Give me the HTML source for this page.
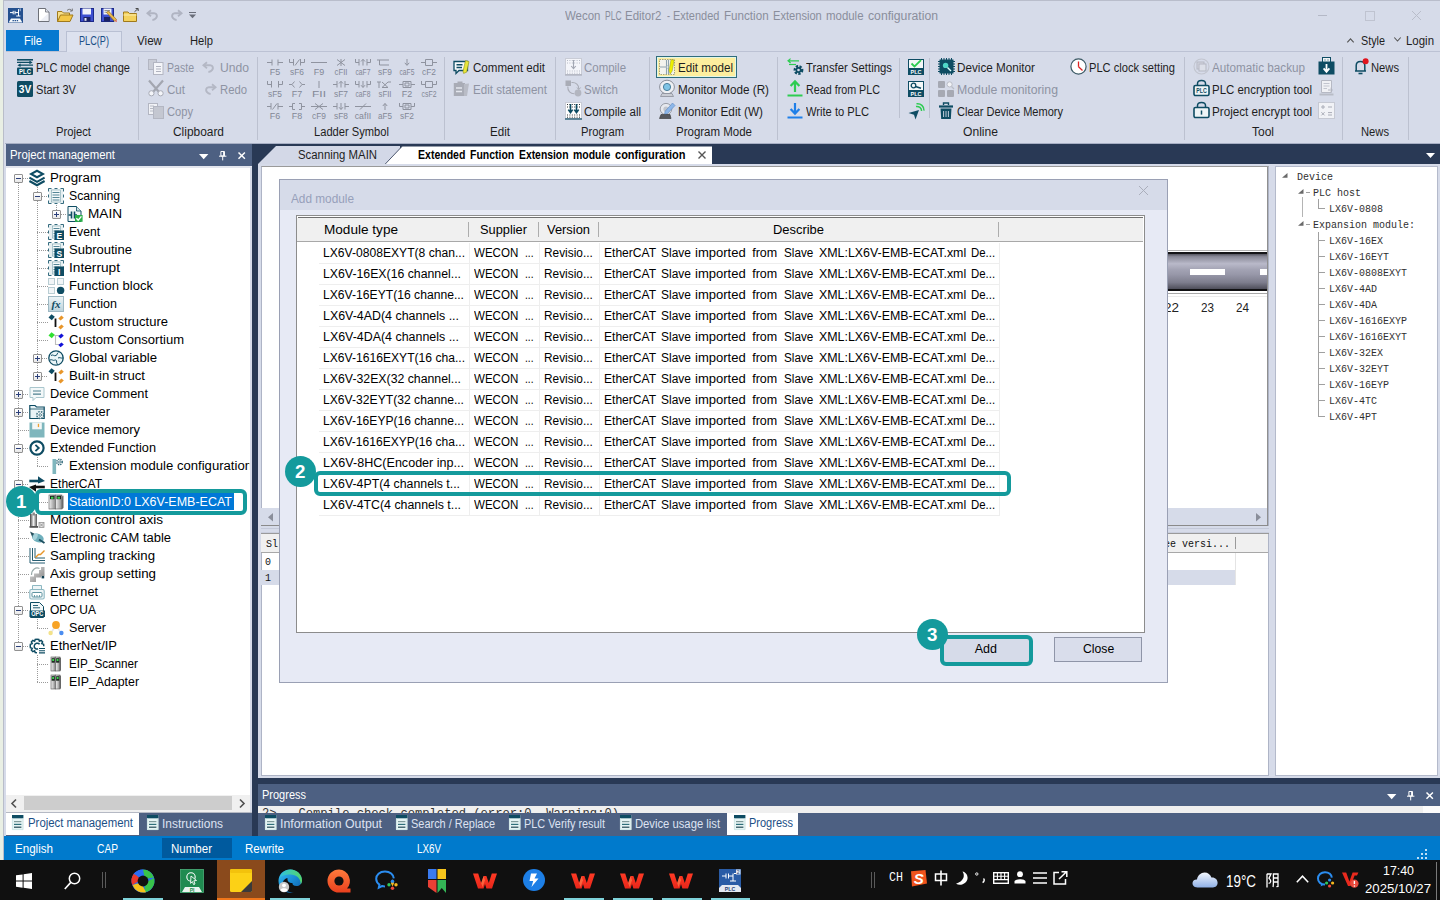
<!DOCTYPE html>
<html><head><meta charset="utf-8"><title>Wecon PLC Editor2</title>
<style>
html,body{margin:0;padding:0;}
body{width:1440px;height:900px;overflow:hidden;position:relative;background:#d6dbe9;font-family:"Liberation Sans",sans-serif;}
.t{position:absolute;white-space:nowrap;margin:0;padding:0;}
.r{position:absolute;box-sizing:border-box;margin:0;padding:0;}
svg{overflow:visible;}
</style></head><body>
<div class="r" style="left:0px;top:0px;width:3px;height:900px;background:#e9efe4;"></div>
<div class="r" style="left:3px;top:0px;width:1px;height:860px;background:#b9bdc9;"></div>
<div class="t" style="left:565.00px;top:7.00px;font-size:12px;line-height:18px;color:#8a8e9c;transform:scale(0.9561,1.000);transform-origin:0 50%;">Wecon</div>
<div class="t" style="left:604.70px;top:7.00px;font-size:12px;line-height:18px;color:#8a8e9c;transform:scale(0.7111,1.000);transform-origin:0 50%;">PLC</div>
<div class="t" style="left:625.30px;top:7.00px;font-size:12px;line-height:18px;color:#8a8e9c;transform:scale(0.9573,1.000);transform-origin:0 50%;">Editor2</div>
<div class="t" style="left:666.70px;top:7.00px;font-size:12px;line-height:18px;color:#8a8e9c;transform:scale(0.7507,1.000);transform-origin:0 50%;">-</div>
<div class="t" style="left:672.80px;top:7.00px;font-size:12px;line-height:18px;color:#8a8e9c;transform:scale(0.9151,1.000);transform-origin:0 50%;">Extended</div>
<div class="t" style="left:723.70px;top:7.00px;font-size:12px;line-height:18px;color:#8a8e9c;transform:scale(0.9690,1.000);transform-origin:0 50%;">Function</div>
<div class="t" style="left:772.50px;top:7.00px;font-size:12px;line-height:18px;color:#8a8e9c;transform:scale(0.9260,1.000);transform-origin:0 50%;">Extension</div>
<div class="t" style="left:825.50px;top:7.00px;font-size:12px;line-height:18px;color:#8a8e9c;transform:scale(0.9528,1.000);transform-origin:0 50%;">module</div>
<div class="t" style="left:867.50px;top:7.00px;font-size:12px;line-height:18px;color:#8a8e9c;transform:scale(1.0187,1.000);transform-origin:0 50%;">configuration</div>
<div class="r" style="left:1318px;top:15px;width:9px;height:1px;background:#b4b8c6;"></div>
<div class="r" style="left:4px;top:0px;width:1436px;height:1px;background:#b9bdcb;"></div>
<div class="r" style="left:1365px;top:11px;width:9.5px;height:9.5px;border:1px solid #bfc3d0;"></div>
<svg class="r" style="left:1412px;top:11px;" width="9" height="9" viewBox="0 0 9 9" preserveAspectRatio="none"><path d="M0 0L9 9M9 0L0 9" stroke="#b9bdca" stroke-width="1" fill="none"/></svg>
<div class="r" style="left:6px;top:30px;width:53px;height:21px;background:#0679d0;"></div>
<div class="t" style="left:24.00px;top:32.00px;font-size:12px;line-height:18px;color:#ffffff;transform:scale(0.9309,1.000);transform-origin:0 50%;">File</div>
<div class="r" style="left:66px;top:31px;width:56px;height:21px;background:#dde2ef;border:1px solid #b9c0d3;border-bottom:none;"></div>
<div class="t" style="left:79.00px;top:32.00px;font-size:12px;line-height:18px;color:#1b4f86;transform:scale(0.7626,1.000);transform-origin:0 50%;">PLC(P)</div>
<div class="t" style="left:137.00px;top:32.00px;font-size:12px;line-height:18px;color:#1e1e1e;transform:scale(0.9692,1.000);transform-origin:0 50%;">View</div>
<div class="t" style="left:190.00px;top:32.00px;font-size:12px;line-height:18px;color:#1e1e1e;transform:scale(0.9319,1.000);transform-origin:0 50%;">Help</div>
<svg class="r" style="left:1347px;top:38px;" width="7" height="5" viewBox="0 0 7 5" preserveAspectRatio="none"><path d="M0.3 4.3L3.5 0.8L6.7 4.3" stroke="#555" stroke-width="1.1" fill="none"/></svg>
<div class="t" style="left:1361.00px;top:32.00px;font-size:12px;line-height:18px;color:#1e1e1e;transform:scale(0.8996,1.000);transform-origin:0 50%;">Style</div>
<svg class="r" style="left:1394px;top:37px;" width="7" height="5" viewBox="0 0 7 5" preserveAspectRatio="none"><path d="M0.3 0.5L3.5 4L6.7 0.5" stroke="#555" stroke-width="1.1" fill="none"/></svg>
<div class="t" style="left:1406.00px;top:32.00px;font-size:12px;line-height:18px;color:#1e1e1e;transform:scale(0.9536,1.000);transform-origin:0 50%;">Login</div>
<div class="r" style="left:6px;top:51px;width:60px;height:1px;background:#bcc2d4;"></div>
<div class="r" style="left:122px;top:51px;width:1318px;height:1px;background:#bcc2d4;"></div>
<div class="r" style="left:138px;top:57px;width:1px;height:83px;background:#bcc1d0;"></div>
<div class="r" style="left:257px;top:57px;width:1px;height:83px;background:#bcc1d0;"></div>
<div class="r" style="left:444px;top:57px;width:1px;height:83px;background:#bcc1d0;"></div>
<div class="r" style="left:555px;top:57px;width:1px;height:83px;background:#bcc1d0;"></div>
<div class="r" style="left:649px;top:57px;width:1px;height:83px;background:#bcc1d0;"></div>
<div class="r" style="left:777px;top:57px;width:1px;height:83px;background:#bcc1d0;"></div>
<div class="r" style="left:1184px;top:57px;width:1px;height:83px;background:#bcc1d0;"></div>
<div class="r" style="left:1342px;top:57px;width:1px;height:83px;background:#bcc1d0;"></div>
<div class="r" style="left:1408px;top:57px;width:1px;height:83px;background:#bcc1d0;"></div>
<div class="r" style="left:899px;top:58px;width:1px;height:60px;background:#bcc1d0;"></div>
<div class="r" style="left:929px;top:58px;width:1px;height:60px;background:#bcc1d0;"></div>
<div class="t" style="left:56.00px;top:123.00px;font-size:12px;line-height:18px;color:#1e1e1e;transform:scale(0.9371,1.000);transform-origin:0 50%;">Project</div>
<div class="t" style="left:173.00px;top:123.00px;font-size:12px;line-height:18px;color:#1e1e1e;transform:scale(0.9929,1.000);transform-origin:0 50%;">Clipboard</div>
<div class="t" style="left:314.00px;top:123.00px;font-size:12px;line-height:18px;color:#1e1e1e;transform:scale(0.9292,1.000);transform-origin:0 50%;">Ladder Symbol</div>
<div class="t" style="left:490.00px;top:123.00px;font-size:12px;line-height:18px;color:#1e1e1e;transform:scale(0.9672,1.000);transform-origin:0 50%;">Edit</div>
<div class="t" style="left:581.00px;top:123.00px;font-size:12px;line-height:18px;color:#1e1e1e;transform:scale(0.9345,1.000);transform-origin:0 50%;">Program</div>
<div class="t" style="left:676.00px;top:123.00px;font-size:12px;line-height:18px;color:#1e1e1e;transform:scale(0.9576,1.000);transform-origin:0 50%;">Program Mode</div>
<div class="t" style="left:963.00px;top:123.00px;font-size:12px;line-height:18px;color:#1e1e1e;transform:scale(1.0090,1.000);transform-origin:0 50%;">Online</div>
<div class="t" style="left:1252.00px;top:123.00px;font-size:12px;line-height:18px;color:#1e1e1e;">Tool</div>
<div class="t" style="left:1361.00px;top:123.00px;font-size:12px;line-height:18px;color:#1e1e1e;transform:scale(0.9331,1.000);transform-origin:0 50%;">News</div>
<div class="t" style="left:36.00px;top:58.50px;font-size:12px;line-height:18px;color:#1e1e1e;transform:scale(0.9210,1.000);transform-origin:0 50%;">PLC model change</div>
<div class="t" style="left:36.00px;top:80.50px;font-size:12px;line-height:18px;color:#1e1e1e;transform:scale(0.9226,1.000);transform-origin:0 50%;">Start 3V</div>
<div class="t" style="left:167.00px;top:58.50px;font-size:12px;line-height:18px;color:#8e93a3;transform:scale(0.8799,1.000);transform-origin:0 50%;">Paste</div>
<div class="t" style="left:220.00px;top:58.50px;font-size:12px;line-height:18px;color:#8e93a3;transform:scale(1.0109,1.000);transform-origin:0 50%;">Undo</div>
<div class="t" style="left:167.00px;top:80.50px;font-size:12px;line-height:18px;color:#8e93a3;transform:scale(0.9639,1.000);transform-origin:0 50%;">Cut</div>
<div class="t" style="left:220.00px;top:80.50px;font-size:12px;line-height:18px;color:#8e93a3;transform:scale(0.9412,1.000);transform-origin:0 50%;">Redo</div>
<div class="t" style="left:167.00px;top:102.50px;font-size:12px;line-height:18px;color:#8e93a3;transform:scale(0.9281,1.000);transform-origin:0 50%;">Copy</div>
<div class="t" style="left:473.00px;top:58.50px;font-size:12px;line-height:18px;color:#1e1e1e;transform:scale(0.9639,1.000);transform-origin:0 50%;">Comment edit</div>
<div class="t" style="left:473.00px;top:80.50px;font-size:12px;line-height:18px;color:#8e93a3;transform:scale(0.9647,1.000);transform-origin:0 50%;">Edit statement</div>
<div class="t" style="left:584.00px;top:58.50px;font-size:12px;line-height:18px;color:#8e93a3;transform:scale(0.9542,1.000);transform-origin:0 50%;">Compile</div>
<div class="t" style="left:584.00px;top:80.50px;font-size:12px;line-height:18px;color:#8e93a3;transform:scale(0.9620,1.000);transform-origin:0 50%;">Switch</div>
<div class="t" style="left:584.00px;top:102.50px;font-size:12px;line-height:18px;color:#1e1e1e;transform:scale(0.9603,1.000);transform-origin:0 50%;">Compile all</div>
<div class="r" style="left:656px;top:56px;width:81px;height:22px;background:#fdee9e;border:1px solid #2f6d7c;box-shadow:inset 0 0 0 1px #e3f6e6;"></div>
<div class="t" style="left:678.00px;top:58.50px;font-size:12px;line-height:18px;color:#1e1e1e;transform:scale(0.9701,1.000);transform-origin:0 50%;">Edit model</div>
<div class="t" style="left:678.00px;top:80.50px;font-size:12px;line-height:18px;color:#1e1e1e;transform:scale(0.9747,1.000);transform-origin:0 50%;">Monitor Mode (R)</div>
<div class="t" style="left:678.00px;top:102.50px;font-size:12px;line-height:18px;color:#1e1e1e;transform:scale(0.9806,1.000);transform-origin:0 50%;">Monitor Edit (W)</div>
<div class="t" style="left:806.00px;top:58.50px;font-size:12px;line-height:18px;color:#1e1e1e;transform:scale(0.9458,1.000);transform-origin:0 50%;">Transfer Settings</div>
<div class="t" style="left:806.00px;top:80.50px;font-size:12px;line-height:18px;color:#1e1e1e;transform:scale(0.8948,1.000);transform-origin:0 50%;">Read from PLC</div>
<div class="t" style="left:806.00px;top:102.50px;font-size:12px;line-height:18px;color:#1e1e1e;transform:scale(0.9292,1.000);transform-origin:0 50%;">Write to PLC</div>
<div class="t" style="left:957.00px;top:58.50px;font-size:12px;line-height:18px;color:#1e1e1e;transform:scale(0.9747,1.000);transform-origin:0 50%;">Device Monitor</div>
<div class="t" style="left:957.00px;top:80.50px;font-size:12px;line-height:18px;color:#8e93a3;transform:scale(1.0231,1.000);transform-origin:0 50%;">Module monitoring</div>
<div class="t" style="left:957.00px;top:102.50px;font-size:12px;line-height:18px;color:#1e1e1e;transform:scale(0.9189,1.000);transform-origin:0 50%;">Clear Device Memory</div>
<div class="t" style="left:1089.00px;top:58.50px;font-size:12px;line-height:18px;color:#1e1e1e;transform:scale(0.9277,1.000);transform-origin:0 50%;">PLC clock setting</div>
<div class="t" style="left:1212.00px;top:58.50px;font-size:12px;line-height:18px;color:#8e93a3;transform:scale(0.9750,1.000);transform-origin:0 50%;">Automatic backup</div>
<div class="t" style="left:1212.00px;top:80.50px;font-size:12px;line-height:18px;color:#1e1e1e;transform:scale(0.9549,1.000);transform-origin:0 50%;">PLC encryption tool</div>
<div class="t" style="left:1212.00px;top:102.50px;font-size:12px;line-height:18px;color:#1e1e1e;transform:scale(0.9736,1.000);transform-origin:0 50%;">Project encrypt tool</div>
<div class="t" style="left:1371.00px;top:58.50px;font-size:12px;line-height:18px;color:#1e1e1e;transform:scale(0.9331,1.000);transform-origin:0 50%;">News</div>
<div class="r" style="left:5px;top:144px;width:1435px;height:692px;background:#293955;"></div>
<div class="r" style="left:5px;top:143px;width:1435px;height:1px;background:#a7afc4;"></div>
<div class="r" style="left:4px;top:144px;width:2px;height:692px;background:#d6dbe9;"></div>
<div class="r" style="left:6px;top:144px;width:246px;height:22px;background:#4d6082;"></div>
<div class="t" style="left:10.00px;top:146.00px;font-size:12px;line-height:18px;color:#ffffff;transform:scale(0.9483,1.000);transform-origin:0 50%;">Project management</div>
<div class="r" style="left:6px;top:166px;width:246px;height:646px;background:#ffffff;"></div>
<div class="r" style="left:6px;top:166px;width:246px;height:2px;background:#e3e6ee;"></div>
<div class="r" style="left:250px;top:167px;width:2px;height:645px;background:#d6dbe9;"></div>
<div class="r" style="left:6px;top:795px;width:244px;height:16.5px;background:#f0f0f0;"></div>
<div class="r" style="left:24px;top:796px;width:208px;height:14px;background:#cdcdcd;"></div>
<svg class="r" style="left:11px;top:799px;" width="6" height="9" viewBox="0 0 6 9" preserveAspectRatio="none"><path d="M5 0.5L1 4.5L5 8.5" stroke="#505050" stroke-width="1.6" fill="none"/></svg>
<svg class="r" style="left:239px;top:799px;" width="6" height="9" viewBox="0 0 6 9" preserveAspectRatio="none"><path d="M1 0.5L5 4.5L1 8.5" stroke="#505050" stroke-width="1.6" fill="none"/></svg>
<div class="r" style="left:6px;top:811.5px;width:246px;height:1.5px;background:#b5b9c4;"></div>
<div class="r" style="left:6px;top:813px;width:246px;height:23px;background:#4d6082;"></div>
<div class="r" style="left:6px;top:813px;width:133px;height:22px;background:#ffffff;"></div>
<div class="t" style="left:28.00px;top:814.00px;font-size:12px;line-height:18px;color:#1b4f86;transform:scale(0.9483,1.000);transform-origin:0 50%;">Project management</div>
<div class="t" style="left:162.00px;top:815.00px;font-size:12px;line-height:18px;color:#dde3f2;transform:scale(0.9941,1.000);transform-origin:0 50%;">Instructions</div>
<svg class="r" style="left:258px;top:144px;" width="460" height="22" viewBox="0 0 460 22" preserveAspectRatio="none"><path d="M0 20L18 2H142V20Z" fill="#d3d8e7"/><path d="M127 20L144 2.4H454V20Z" fill="#ffffff"/><path d="M127 20.3L144 2.4" stroke="#3a4660" stroke-width="0.9" fill="none"/></svg>
<div class="t" style="left:298.00px;top:146.00px;font-size:12px;line-height:18px;color:#1e1e1e;transform:scale(0.9475,1.000);transform-origin:0 50%;">Scanning MAIN</div>
<div class="t" style="left:417.50px;top:146.00px;font-size:12px;line-height:18px;color:#000000;transform:scale(0.8776,1.000);transform-origin:0 50%;font-weight:bold;">Extended</div>
<div class="t" style="left:469.80px;top:146.00px;font-size:12px;line-height:18px;color:#000000;transform:scale(0.8726,1.000);transform-origin:0 50%;font-weight:bold;">Function</div>
<div class="t" style="left:518.70px;top:146.00px;font-size:12px;line-height:18px;color:#000000;transform:scale(0.8632,1.000);transform-origin:0 50%;font-weight:bold;">Extension</div>
<div class="t" style="left:573.00px;top:146.00px;font-size:12px;line-height:18px;color:#000000;transform:scale(0.8718,1.000);transform-origin:0 50%;font-weight:bold;">module</div>
<div class="t" style="left:615.20px;top:146.00px;font-size:12px;line-height:18px;color:#000000;transform:scale(0.9184,1.000);transform-origin:0 50%;font-weight:bold;">configuration</div>
<svg class="r" style="left:698px;top:151px;" width="8" height="8" viewBox="0 0 8 8" preserveAspectRatio="none"><path d="M0.5 0.5L7.5 7.5M7.5 0.5L0.5 7.5" stroke="#555" stroke-width="1.4" fill="none"/></svg>
<svg class="r" style="left:1426px;top:153px;" width="9" height="5" viewBox="0 0 9 5" preserveAspectRatio="none"><path d="M0 0H9L4.5 5Z" fill="#ffffff"/></svg>
<div class="r" style="left:258px;top:164px;width:1182px;height:614px;background:#d6dbe9;"></div>
<div class="r" style="left:261px;top:166px;width:1008px;height:610px;background:#ffffff;border:1px solid #aeb4c6;border-top:1px solid #9a9a9a;"></div>
<div class="r" style="left:1275px;top:166px;width:163px;height:610px;background:#ffffff;border:1px solid #b4bacb;"></div>
<div class="r" style="left:258px;top:784px;width:1182px;height:22px;background:#4d6082;"></div>
<div class="t" style="left:262.00px;top:786.00px;font-size:12px;line-height:18px;color:#ffffff;transform:scale(0.9163,1.000);transform-origin:0 50%;">Progress</div>
<div class="r" style="left:258px;top:806px;width:1182px;height:7px;background:#efefef;"></div>
<div class="r" style="left:1423px;top:806px;width:17px;height:7px;background:#fbfbfb;"></div>
<div class="r" style="left:258px;top:813px;width:1182px;height:23px;background:#4d6082;"></div>
<div class="r" style="left:727px;top:813px;width:71px;height:22px;background:#ffffff;"></div>
<div class="t" style="left:280.00px;top:815.00px;font-size:12px;line-height:18px;color:#dde3f2;transform:scale(1.0263,1.000);transform-origin:0 50%;">Information Output</div>
<div class="t" style="left:411.00px;top:815.00px;font-size:12px;line-height:18px;color:#dde3f2;transform:scale(0.9125,1.000);transform-origin:0 50%;">Search / Replace</div>
<div class="t" style="left:524.00px;top:815.00px;font-size:12px;line-height:18px;color:#dde3f2;transform:scale(0.9064,1.000);transform-origin:0 50%;">PLC Verify result</div>
<div class="t" style="left:635.00px;top:815.00px;font-size:12px;line-height:18px;color:#dde3f2;transform:scale(0.9371,1.000);transform-origin:0 50%;">Device usage list</div>
<div class="t" style="left:749.00px;top:814.00px;font-size:12px;line-height:18px;color:#1b4f86;transform:scale(0.9163,1.000);transform-origin:0 50%;">Progress</div>
<div class="r" style="left:4px;top:835.5px;width:1436px;height:24.5px;background:#007acc;"></div>
<div class="r" style="left:162px;top:838px;width:70px;height:20px;background:#005a9e;"></div>
<div class="t" style="left:15.00px;top:839.50px;font-size:12px;line-height:18px;color:#fff;transform:scale(0.9655,1.000);transform-origin:0 50%;">English</div>
<div class="t" style="left:97.00px;top:839.50px;font-size:12px;line-height:18px;color:#fff;transform:scale(0.8511,1.000);transform-origin:0 50%;">CAP</div>
<div class="t" style="left:171.00px;top:839.50px;font-size:12px;line-height:18px;color:#fff;transform:scale(0.9606,1.000);transform-origin:0 50%;">Number</div>
<div class="t" style="left:245.00px;top:839.50px;font-size:12px;line-height:18px;color:#fff;transform:scale(0.9588,1.000);transform-origin:0 50%;">Rewrite</div>
<div class="t" style="left:417.00px;top:839.50px;font-size:12px;line-height:18px;color:#fff;transform:scale(0.8176,1.000);transform-origin:0 50%;">LX6V</div>
<div class="r" style="left:0px;top:859.5px;width:1440px;height:40.5px;background:#101010;"></div>
<div class="t" style="left:1383.00px;top:862.00px;font-size:12px;line-height:18px;color:#fff;transform:scale(1.0323,1.000);transform-origin:0 50%;">17:40</div>
<div class="t" style="left:1365.00px;top:880.00px;font-size:12px;line-height:18px;color:#fff;transform:scale(1.0989,1.000);transform-origin:0 50%;">2025/10/27</div>
<div class="t" style="left:1226.00px;top:871.00px;font-size:16px;line-height:22px;color:#fff;transform:scale(0.8392,1.000);transform-origin:0 50%;">19°C</div>
<div class="r" style="left:18px;top:183px;width:1px;height:463px;background:repeating-linear-gradient(to bottom,#9a9a9a 0 1px,transparent 1px 2px);"></div>
<div class="r" style="left:37px;top:187px;width:1px;height:189px;background:repeating-linear-gradient(to bottom,#9a9a9a 0 1px,transparent 1px 2px);"></div>
<div class="r" style="left:56px;top:205px;width:1px;height:9px;background:repeating-linear-gradient(to bottom,#9a9a9a 0 1px,transparent 1px 2px);"></div>
<div class="r" style="left:37px;top:457px;width:1px;height:9px;background:repeating-linear-gradient(to bottom,#9a9a9a 0 1px,transparent 1px 2px);"></div>
<div class="r" style="left:37px;top:493px;width:1px;height:9px;background:repeating-linear-gradient(to bottom,#9a9a9a 0 1px,transparent 1px 2px);"></div>
<div class="r" style="left:37px;top:619px;width:1px;height:9px;background:repeating-linear-gradient(to bottom,#9a9a9a 0 1px,transparent 1px 2px);"></div>
<div class="r" style="left:37px;top:655px;width:1px;height:27px;background:repeating-linear-gradient(to bottom,#9a9a9a 0 1px,transparent 1px 2px);"></div>
<div class="r" style="left:23px;top:178px;width:6px;height:1px;background:repeating-linear-gradient(to right,#9a9a9a 0 1px,transparent 1px 2px);"></div>
<div class="r" style="left:14px;top:174px;width:9px;height:9px;background:#ffffff;border:1px solid #919191;border-radius:1px;background:linear-gradient(#fff,#e8e8e8);"></div>
<div class="r" style="left:16px;top:178px;width:5px;height:1px;background:#2b3f7a;"></div>
<div class="t" style="left:50.00px;top:168.50px;font-size:12px;line-height:18px;color:#000000;transform:scale(1.1084,1.000);transform-origin:0 50%;">Program</div>
<div class="r" style="left:42px;top:196px;width:6px;height:1px;background:repeating-linear-gradient(to right,#9a9a9a 0 1px,transparent 1px 2px);"></div>
<div class="r" style="left:33px;top:192px;width:9px;height:9px;background:#ffffff;border:1px solid #919191;border-radius:1px;background:linear-gradient(#fff,#e8e8e8);"></div>
<div class="r" style="left:35px;top:196px;width:5px;height:1px;background:#2b3f7a;"></div>
<div class="t" style="left:69.00px;top:186.50px;font-size:12px;line-height:18px;color:#000000;transform:scale(1.0192,1.000);transform-origin:0 50%;">Scanning</div>
<div class="r" style="left:61px;top:214px;width:6px;height:1px;background:repeating-linear-gradient(to right,#9a9a9a 0 1px,transparent 1px 2px);"></div>
<div class="r" style="left:52px;top:210px;width:9px;height:9px;background:#ffffff;border:1px solid #919191;border-radius:1px;background:linear-gradient(#fff,#e8e8e8);"></div>
<div class="r" style="left:54px;top:214px;width:5px;height:1px;background:#2b3f7a;"></div>
<div class="r" style="left:56px;top:212px;width:1px;height:5px;background:#2b3f7a;"></div>
<div class="t" style="left:88.00px;top:204.50px;font-size:12px;line-height:18px;color:#000000;transform:scale(1.1333,1.000);transform-origin:0 50%;">MAIN</div>
<div class="r" style="left:37px;top:232px;width:11px;height:1px;background:repeating-linear-gradient(to right,#9a9a9a 0 1px,transparent 1px 2px);"></div>
<div class="t" style="left:69.00px;top:222.50px;font-size:12px;line-height:18px;color:#000000;transform:scale(1.0102,1.000);transform-origin:0 50%;">Event</div>
<div class="r" style="left:37px;top:250px;width:11px;height:1px;background:repeating-linear-gradient(to right,#9a9a9a 0 1px,transparent 1px 2px);"></div>
<div class="t" style="left:69.00px;top:240.50px;font-size:12px;line-height:18px;color:#000000;transform:scale(1.0854,1.000);transform-origin:0 50%;">Subroutine</div>
<div class="r" style="left:37px;top:268px;width:11px;height:1px;background:repeating-linear-gradient(to right,#9a9a9a 0 1px,transparent 1px 2px);"></div>
<div class="t" style="left:69.00px;top:258.50px;font-size:12px;line-height:18px;color:#000000;transform:scale(1.1412,1.000);transform-origin:0 50%;">Interrupt</div>
<div class="r" style="left:37px;top:286px;width:11px;height:1px;background:repeating-linear-gradient(to right,#9a9a9a 0 1px,transparent 1px 2px);"></div>
<div class="t" style="left:69.00px;top:276.50px;font-size:12px;line-height:18px;color:#000000;transform:scale(1.0856,1.000);transform-origin:0 50%;">Function block</div>
<div class="r" style="left:37px;top:304px;width:11px;height:1px;background:repeating-linear-gradient(to right,#9a9a9a 0 1px,transparent 1px 2px);"></div>
<div class="t" style="left:69.00px;top:294.50px;font-size:12px;line-height:18px;color:#000000;transform:scale(1.0429,1.000);transform-origin:0 50%;">Function</div>
<div class="r" style="left:37px;top:322px;width:11px;height:1px;background:repeating-linear-gradient(to right,#9a9a9a 0 1px,transparent 1px 2px);"></div>
<div class="t" style="left:69.00px;top:312.50px;font-size:12px;line-height:18px;color:#000000;transform:scale(1.0836,1.000);transform-origin:0 50%;">Custom structure</div>
<div class="r" style="left:37px;top:340px;width:11px;height:1px;background:repeating-linear-gradient(to right,#9a9a9a 0 1px,transparent 1px 2px);"></div>
<div class="t" style="left:69.00px;top:330.50px;font-size:12px;line-height:18px;color:#000000;transform:scale(1.0846,1.000);transform-origin:0 50%;">Custom Consortium</div>
<div class="r" style="left:42px;top:358px;width:6px;height:1px;background:repeating-linear-gradient(to right,#9a9a9a 0 1px,transparent 1px 2px);"></div>
<div class="r" style="left:33px;top:354px;width:9px;height:9px;background:#ffffff;border:1px solid #919191;border-radius:1px;background:linear-gradient(#fff,#e8e8e8);"></div>
<div class="r" style="left:35px;top:358px;width:5px;height:1px;background:#2b3f7a;"></div>
<div class="r" style="left:37px;top:356px;width:1px;height:5px;background:#2b3f7a;"></div>
<div class="t" style="left:69.00px;top:348.50px;font-size:12px;line-height:18px;color:#000000;transform:scale(1.0994,1.000);transform-origin:0 50%;">Global variable</div>
<div class="r" style="left:42px;top:376px;width:6px;height:1px;background:repeating-linear-gradient(to right,#9a9a9a 0 1px,transparent 1px 2px);"></div>
<div class="r" style="left:33px;top:372px;width:9px;height:9px;background:#ffffff;border:1px solid #919191;border-radius:1px;background:linear-gradient(#fff,#e8e8e8);"></div>
<div class="r" style="left:35px;top:376px;width:5px;height:1px;background:#2b3f7a;"></div>
<div class="r" style="left:37px;top:374px;width:1px;height:5px;background:#2b3f7a;"></div>
<div class="t" style="left:69.00px;top:366.50px;font-size:12px;line-height:18px;color:#000000;transform:scale(1.0959,1.000);transform-origin:0 50%;">Built-in struct</div>
<div class="r" style="left:23px;top:394px;width:6px;height:1px;background:repeating-linear-gradient(to right,#9a9a9a 0 1px,transparent 1px 2px);"></div>
<div class="r" style="left:14px;top:390px;width:9px;height:9px;background:#ffffff;border:1px solid #919191;border-radius:1px;background:linear-gradient(#fff,#e8e8e8);"></div>
<div class="r" style="left:16px;top:394px;width:5px;height:1px;background:#2b3f7a;"></div>
<div class="r" style="left:18px;top:392px;width:1px;height:5px;background:#2b3f7a;"></div>
<div class="t" style="left:50.00px;top:384.50px;font-size:12px;line-height:18px;color:#000000;transform:scale(1.0649,1.000);transform-origin:0 50%;">Device Comment</div>
<div class="r" style="left:23px;top:412px;width:6px;height:1px;background:repeating-linear-gradient(to right,#9a9a9a 0 1px,transparent 1px 2px);"></div>
<div class="r" style="left:14px;top:408px;width:9px;height:9px;background:#ffffff;border:1px solid #919191;border-radius:1px;background:linear-gradient(#fff,#e8e8e8);"></div>
<div class="r" style="left:16px;top:412px;width:5px;height:1px;background:#2b3f7a;"></div>
<div class="r" style="left:18px;top:410px;width:1px;height:5px;background:#2b3f7a;"></div>
<div class="t" style="left:50.00px;top:402.50px;font-size:12px;line-height:18px;color:#000000;transform:scale(1.0710,1.000);transform-origin:0 50%;">Parameter</div>
<div class="r" style="left:18px;top:430px;width:11px;height:1px;background:repeating-linear-gradient(to right,#9a9a9a 0 1px,transparent 1px 2px);"></div>
<div class="t" style="left:50.00px;top:420.50px;font-size:12px;line-height:18px;color:#000000;transform:scale(1.0798,1.000);transform-origin:0 50%;">Device memory</div>
<div class="r" style="left:23px;top:448px;width:6px;height:1px;background:repeating-linear-gradient(to right,#9a9a9a 0 1px,transparent 1px 2px);"></div>
<div class="r" style="left:14px;top:444px;width:9px;height:9px;background:#ffffff;border:1px solid #919191;border-radius:1px;background:linear-gradient(#fff,#e8e8e8);"></div>
<div class="r" style="left:16px;top:448px;width:5px;height:1px;background:#2b3f7a;"></div>
<div class="t" style="left:50.00px;top:438.50px;font-size:12px;line-height:18px;color:#000000;transform:scale(1.0593,1.000);transform-origin:0 50%;">Extended Function</div>
<div class="r" style="left:37px;top:466px;width:11px;height:1px;background:repeating-linear-gradient(to right,#9a9a9a 0 1px,transparent 1px 2px);"></div>
<div class="t" style="left:69.00px;top:456.50px;font-size:12px;line-height:18px;color:#000000;transform:scale(1.0929,1.000);transform-origin:0 50%;width:164.69px;overflow:hidden;">Extension module configuration</div>
<div class="r" style="left:23px;top:484px;width:6px;height:1px;background:repeating-linear-gradient(to right,#9a9a9a 0 1px,transparent 1px 2px);"></div>
<div class="r" style="left:14px;top:480px;width:9px;height:9px;background:#ffffff;border:1px solid #919191;border-radius:1px;background:linear-gradient(#fff,#e8e8e8);"></div>
<div class="r" style="left:16px;top:484px;width:5px;height:1px;background:#2b3f7a;"></div>
<div class="t" style="left:50.00px;top:474.50px;font-size:12px;line-height:18px;color:#000000;transform:scale(1.0040,1.000);transform-origin:0 50%;">EtherCAT</div>
<div class="r" style="left:37px;top:502px;width:11px;height:1px;background:repeating-linear-gradient(to right,#9a9a9a 0 1px,transparent 1px 2px);"></div>
<div class="r" style="left:67.5px;top:493px;width:166.5px;height:17px;background:#0078d7;"></div>
<div class="r" style="left:234px;top:492px;width:11px;height:18px;background:#ffffff;"></div>
<div class="t" style="left:69.00px;top:492.50px;font-size:12px;line-height:18px;color:#ffffff;transform:scale(1.0415,1.000);transform-origin:0 50%;">StationID:0 LX6V-EMB-ECAT</div>
<div class="r" style="left:18px;top:520px;width:11px;height:1px;background:repeating-linear-gradient(to right,#9a9a9a 0 1px,transparent 1px 2px);"></div>
<div class="t" style="left:50.00px;top:510.50px;font-size:12px;line-height:18px;color:#000000;transform:scale(1.1295,1.000);transform-origin:0 50%;">Motion control axis</div>
<div class="r" style="left:18px;top:538px;width:11px;height:1px;background:repeating-linear-gradient(to right,#9a9a9a 0 1px,transparent 1px 2px);"></div>
<div class="t" style="left:50.00px;top:528.50px;font-size:12px;line-height:18px;color:#000000;transform:scale(1.0799,1.000);transform-origin:0 50%;">Electronic CAM table</div>
<div class="r" style="left:18px;top:556px;width:11px;height:1px;background:repeating-linear-gradient(to right,#9a9a9a 0 1px,transparent 1px 2px);"></div>
<div class="t" style="left:50.00px;top:546.50px;font-size:12px;line-height:18px;color:#000000;transform:scale(1.1009,1.000);transform-origin:0 50%;">Sampling tracking</div>
<div class="r" style="left:18px;top:574px;width:11px;height:1px;background:repeating-linear-gradient(to right,#9a9a9a 0 1px,transparent 1px 2px);"></div>
<div class="t" style="left:50.00px;top:564.50px;font-size:12px;line-height:18px;color:#000000;transform:scale(1.1113,1.000);transform-origin:0 50%;">Axis group setting</div>
<div class="r" style="left:18px;top:592px;width:11px;height:1px;background:repeating-linear-gradient(to right,#9a9a9a 0 1px,transparent 1px 2px);"></div>
<div class="t" style="left:50.00px;top:582.50px;font-size:12px;line-height:18px;color:#000000;transform:scale(1.0581,1.000);transform-origin:0 50%;">Ethernet</div>
<div class="r" style="left:23px;top:610px;width:6px;height:1px;background:repeating-linear-gradient(to right,#9a9a9a 0 1px,transparent 1px 2px);"></div>
<div class="r" style="left:14px;top:606px;width:9px;height:9px;background:#ffffff;border:1px solid #919191;border-radius:1px;background:linear-gradient(#fff,#e8e8e8);"></div>
<div class="r" style="left:16px;top:610px;width:5px;height:1px;background:#2b3f7a;"></div>
<div class="t" style="left:50.00px;top:600.50px;font-size:12px;line-height:18px;color:#000000;">OPC UA</div>
<div class="r" style="left:37px;top:628px;width:11px;height:1px;background:repeating-linear-gradient(to right,#9a9a9a 0 1px,transparent 1px 2px);"></div>
<div class="t" style="left:69.00px;top:618.50px;font-size:12px;line-height:18px;color:#000000;transform:scale(1.0469,1.000);transform-origin:0 50%;">Server</div>
<div class="r" style="left:23px;top:646px;width:6px;height:1px;background:repeating-linear-gradient(to right,#9a9a9a 0 1px,transparent 1px 2px);"></div>
<div class="r" style="left:14px;top:642px;width:9px;height:9px;background:#ffffff;border:1px solid #919191;border-radius:1px;background:linear-gradient(#fff,#e8e8e8);"></div>
<div class="r" style="left:16px;top:646px;width:5px;height:1px;background:#2b3f7a;"></div>
<div class="t" style="left:50.00px;top:636.50px;font-size:12px;line-height:18px;color:#000000;transform:scale(1.0802,1.000);transform-origin:0 50%;">EtherNet/IP</div>
<div class="r" style="left:37px;top:664px;width:11px;height:1px;background:repeating-linear-gradient(to right,#9a9a9a 0 1px,transparent 1px 2px);"></div>
<div class="t" style="left:69.00px;top:654.50px;font-size:12px;line-height:18px;color:#000000;transform:scale(0.9758,1.000);transform-origin:0 50%;">EIP_Scanner</div>
<div class="r" style="left:37px;top:682px;width:11px;height:1px;background:repeating-linear-gradient(to right,#9a9a9a 0 1px,transparent 1px 2px);"></div>
<div class="t" style="left:69.00px;top:672.50px;font-size:12px;line-height:18px;color:#000000;transform:scale(1.0287,1.000);transform-origin:0 50%;">EIP_Adapter</div>
<div class="r" style="left:1168px;top:249.5px;width:99px;height:1.0px;background:#b5b5b5;"></div>
<div class="r" style="left:1168px;top:251.5px;width:99px;height:39.5px;background:linear-gradient(to bottom,#151518 0,#151518 4%,#55555f 5%,#8a8a98 12%,#b9b9c9 30%,#a3a3b4 45%,#9797a8 58%,#7d7d8d 78%,#4e4e5a 95%,#111113 96%,#111113 100%);"></div>
<div class="r" style="left:1190px;top:269px;width:35px;height:6px;background:#ffffff;"></div>
<div class="r" style="left:1260px;top:269px;width:7px;height:6px;background:#ffffff;"></div>
<div class="r" style="left:1168px;top:292.5px;width:99px;height:1.0px;background:#a8a8a8;"></div>
<div class="r" style="left:1168px;top:296px;width:99px;height:1px;background:#ececec;"></div>
<div class="t" style="left:1164.00px;top:299.00px;font-size:12px;line-height:18px;color:#222;transform:scale(1.1238,1.000);transform-origin:0 50%;">22</div>
<div class="t" style="left:1201.00px;top:299.00px;font-size:12px;line-height:18px;color:#222;transform:scale(0.9739,1.000);transform-origin:0 50%;">23</div>
<div class="t" style="left:1236.00px;top:299.00px;font-size:12px;line-height:18px;color:#222;transform:scale(0.9739,1.000);transform-origin:0 50%;">24</div>
<div class="r" style="left:1267px;top:167px;width:1px;height:359px;background:#8f8f8f;"></div>
<div class="r" style="left:261px;top:508px;width:1006px;height:17px;background:#d6dbe9;"></div>
<svg class="r" style="left:267.8px;top:512.8px;" width="5" height="8.4" viewBox="0 0 5 8.4" preserveAspectRatio="none"><path d="M5 0L0 4.2L5 8.4Z" fill="#8a8e9a"/></svg>
<svg class="r" style="left:1256.4px;top:512.8px;" width="5" height="8.4" viewBox="0 0 5 8.4" preserveAspectRatio="none"><path d="M0 0L5 4.2L0 8.4Z" fill="#8a8e9a"/></svg>
<div class="r" style="left:261px;top:525px;width:1007px;height:1px;background:#8a8a8a;"></div>
<div class="r" style="left:261px;top:526px;width:1008px;height:7px;background:#d6dbe9;"></div>
<div class="r" style="left:261px;top:527.5px;width:1008px;height:1.0px;background:#c4c9d9;"></div>
<div class="r" style="left:261px;top:531.5px;width:1008px;height:1.0px;background:#c9cedd;"></div>
<div class="r" style="left:261px;top:533px;width:1008px;height:1px;background:#9a9a9a;"></div>
<div class="r" style="left:261px;top:534px;width:1007px;height:18px;background:#f0f0f0;"></div>
<div class="r" style="left:261px;top:552px;width:1007px;height:1px;background:#a8a8a8;"></div>
<div class="t" style="left:265.50px;top:537.10px;font-size:10px;line-height:16px;color:#111;transform:scale(0.9998,1.130);transform-origin:0 50%;font-family:'Liberation Mono', monospace;">Sl</div>
<div class="t" style="left:264.70px;top:554.80px;font-size:10px;line-height:16px;color:#111;transform:scale(0.9998,1.130);transform-origin:0 50%;font-family:'Liberation Mono', monospace;">0</div>
<div class="r" style="left:261px;top:570px;width:974px;height:15px;background:#d6dbe9;"></div>
<div class="t" style="left:264.70px;top:570.80px;font-size:10px;line-height:16px;color:#111;transform:scale(0.9998,1.130);transform-origin:0 50%;font-family:'Liberation Mono', monospace;">1</div>
<div class="t" style="left:1164.00px;top:537.10px;font-size:10px;line-height:16px;color:#111;transform:scale(0.9998,1.130);transform-origin:0 50%;font-family:'Liberation Mono', monospace;">ee versi...</div>
<div class="r" style="left:1234.5px;top:537px;width:1.0px;height:12px;background:#9a9a9a;"></div>
<div class="r" style="left:1235px;top:553px;width:1px;height:32px;background:#e4e4e4;"></div>
<div class="r" style="left:279px;top:179px;width:889px;height:504px;background:#e7eaf5;border:1px solid #9aa0b4;"></div>
<div class="r" style="left:280px;top:180px;width:887px;height:30px;background:#d6dbe9;"></div>
<div class="t" style="left:291.00px;top:189.50px;font-size:12px;line-height:18px;color:#97a0ba;transform:scale(0.9837,1.000);transform-origin:0 50%;">Add module</div>
<svg class="r" style="left:1139px;top:186px;" width="9" height="9" viewBox="0 0 9 9" preserveAspectRatio="none"><path d="M0 0L9 9M9 0L0 9" stroke="#aaaebb" stroke-width="1" fill="none"/></svg>
<div class="r" style="left:296px;top:215px;width:849px;height:418px;background:#ffffff;border:1px solid #8c8c8c;"></div>
<div class="r" style="left:298px;top:217px;width:845px;height:1px;background:#707070;"></div>
<div class="r" style="left:297px;top:218px;width:846px;height:23px;background:#f0f0f0;"></div>
<div class="r" style="left:297px;top:241px;width:846px;height:1px;background:#a8a8a8;"></div>
<div class="r" style="left:468px;top:222px;width:1px;height:15px;background:#adadad;"></div>
<div class="r" style="left:538px;top:222px;width:1px;height:15px;background:#adadad;"></div>
<div class="r" style="left:598px;top:222px;width:1px;height:15px;background:#adadad;"></div>
<div class="r" style="left:998px;top:222px;width:1px;height:15px;background:#adadad;"></div>
<div class="t" style="left:324.00px;top:220.75px;font-size:12.5px;line-height:18.5px;color:#000;transform:scale(1.0867,1.000);transform-origin:0 50%;">Module type</div>
<div class="t" style="left:480.00px;top:220.75px;font-size:12.5px;line-height:18.5px;color:#000;transform:scale(1.0248,1.000);transform-origin:0 50%;">Supplier</div>
<div class="t" style="left:547.00px;top:220.75px;font-size:12.5px;line-height:18.5px;color:#000;transform:scale(1.0313,1.000);transform-origin:0 50%;">Version</div>
<div class="t" style="left:773.00px;top:220.75px;font-size:12.5px;line-height:18.5px;color:#000;transform:scale(1.0340,1.000);transform-origin:0 50%;">Describe</div>
<div class="t" style="left:323.00px;top:243.75px;font-size:12.5px;line-height:18.5px;color:#000;transform:scale(0.9685,1.000);transform-origin:0 50%;">LX6V-0808EXYT(8 chan...</div>
<div class="t" style="left:473.70px;top:243.75px;font-size:12.5px;line-height:18.5px;color:#000;transform:scale(0.9246,1.000);transform-origin:0 50%;">WECON</div>
<div class="t" style="left:524.50px;top:243.75px;font-size:12.5px;line-height:18.5px;color:#000;transform:scale(0.8159,1.000);transform-origin:0 50%;">...</div>
<div class="t" style="left:543.70px;top:243.75px;font-size:12.5px;line-height:18.5px;color:#000;transform:scale(0.9493,1.000);transform-origin:0 50%;">Revisio...</div>
<div class="t" style="left:603.50px;top:243.75px;font-size:12.5px;line-height:18.5px;color:#000;transform:scale(0.9657,1.000);transform-origin:0 50%;">EtherCAT</div>
<div class="t" style="left:660.50px;top:243.75px;font-size:12.5px;line-height:18.5px;color:#000;transform:scale(0.9562,1.000);transform-origin:0 50%;">Slave</div>
<div class="t" style="left:695.20px;top:243.75px;font-size:12.5px;line-height:18.5px;color:#000;transform:scale(1.0425,1.000);transform-origin:0 50%;">imported</div>
<div class="t" style="left:752.20px;top:243.75px;font-size:12.5px;line-height:18.5px;color:#000;">from</div>
<div class="t" style="left:783.50px;top:243.75px;font-size:12.5px;line-height:18.5px;color:#000;transform:scale(0.9370,1.000);transform-origin:0 50%;">Slave</div>
<div class="t" style="left:818.50px;top:243.75px;font-size:12.5px;line-height:18.5px;color:#000;transform:scale(0.9918,1.000);transform-origin:0 50%;">XML:LX6V-EMB-ECAT.xml</div>
<div class="t" style="left:970.90px;top:243.75px;font-size:12.5px;line-height:18.5px;color:#000;transform:scale(0.9130,1.000);transform-origin:0 50%;">De...</div>
<div class="r" style="left:319px;top:263px;width:681px;height:1px;background:#eeeeee;"></div>
<div class="t" style="left:323.00px;top:264.75px;font-size:12.5px;line-height:18.5px;color:#000;transform:scale(0.9831,1.000);transform-origin:0 50%;">LX6V-16EX(16 channel...</div>
<div class="t" style="left:473.70px;top:264.75px;font-size:12.5px;line-height:18.5px;color:#000;transform:scale(0.9246,1.000);transform-origin:0 50%;">WECON</div>
<div class="t" style="left:524.50px;top:264.75px;font-size:12.5px;line-height:18.5px;color:#000;transform:scale(0.8159,1.000);transform-origin:0 50%;">...</div>
<div class="t" style="left:543.70px;top:264.75px;font-size:12.5px;line-height:18.5px;color:#000;transform:scale(0.9493,1.000);transform-origin:0 50%;">Revisio...</div>
<div class="t" style="left:603.50px;top:264.75px;font-size:12.5px;line-height:18.5px;color:#000;transform:scale(0.9657,1.000);transform-origin:0 50%;">EtherCAT</div>
<div class="t" style="left:660.50px;top:264.75px;font-size:12.5px;line-height:18.5px;color:#000;transform:scale(0.9562,1.000);transform-origin:0 50%;">Slave</div>
<div class="t" style="left:695.20px;top:264.75px;font-size:12.5px;line-height:18.5px;color:#000;transform:scale(1.0425,1.000);transform-origin:0 50%;">imported</div>
<div class="t" style="left:752.20px;top:264.75px;font-size:12.5px;line-height:18.5px;color:#000;">from</div>
<div class="t" style="left:783.50px;top:264.75px;font-size:12.5px;line-height:18.5px;color:#000;transform:scale(0.9370,1.000);transform-origin:0 50%;">Slave</div>
<div class="t" style="left:818.50px;top:264.75px;font-size:12.5px;line-height:18.5px;color:#000;transform:scale(0.9918,1.000);transform-origin:0 50%;">XML:LX6V-EMB-ECAT.xml</div>
<div class="t" style="left:970.90px;top:264.75px;font-size:12.5px;line-height:18.5px;color:#000;transform:scale(0.9130,1.000);transform-origin:0 50%;">De...</div>
<div class="r" style="left:319px;top:284px;width:681px;height:1px;background:#eeeeee;"></div>
<div class="t" style="left:323.00px;top:285.75px;font-size:12.5px;line-height:18.5px;color:#000;transform:scale(0.9708,1.000);transform-origin:0 50%;">LX6V-16EYT(16 channe...</div>
<div class="t" style="left:473.70px;top:285.75px;font-size:12.5px;line-height:18.5px;color:#000;transform:scale(0.9246,1.000);transform-origin:0 50%;">WECON</div>
<div class="t" style="left:524.50px;top:285.75px;font-size:12.5px;line-height:18.5px;color:#000;transform:scale(0.8159,1.000);transform-origin:0 50%;">...</div>
<div class="t" style="left:543.70px;top:285.75px;font-size:12.5px;line-height:18.5px;color:#000;transform:scale(0.9493,1.000);transform-origin:0 50%;">Revisio...</div>
<div class="t" style="left:603.50px;top:285.75px;font-size:12.5px;line-height:18.5px;color:#000;transform:scale(0.9657,1.000);transform-origin:0 50%;">EtherCAT</div>
<div class="t" style="left:660.50px;top:285.75px;font-size:12.5px;line-height:18.5px;color:#000;transform:scale(0.9562,1.000);transform-origin:0 50%;">Slave</div>
<div class="t" style="left:695.20px;top:285.75px;font-size:12.5px;line-height:18.5px;color:#000;transform:scale(1.0425,1.000);transform-origin:0 50%;">imported</div>
<div class="t" style="left:752.20px;top:285.75px;font-size:12.5px;line-height:18.5px;color:#000;">from</div>
<div class="t" style="left:783.50px;top:285.75px;font-size:12.5px;line-height:18.5px;color:#000;transform:scale(0.9370,1.000);transform-origin:0 50%;">Slave</div>
<div class="t" style="left:818.50px;top:285.75px;font-size:12.5px;line-height:18.5px;color:#000;transform:scale(0.9918,1.000);transform-origin:0 50%;">XML:LX6V-EMB-ECAT.xml</div>
<div class="t" style="left:970.90px;top:285.75px;font-size:12.5px;line-height:18.5px;color:#000;transform:scale(0.9130,1.000);transform-origin:0 50%;">De...</div>
<div class="r" style="left:319px;top:305px;width:681px;height:1px;background:#eeeeee;"></div>
<div class="t" style="left:323.00px;top:306.75px;font-size:12.5px;line-height:18.5px;color:#000;transform:scale(0.9935,1.000);transform-origin:0 50%;">LX6V-4AD(4 channels ...</div>
<div class="t" style="left:473.70px;top:306.75px;font-size:12.5px;line-height:18.5px;color:#000;transform:scale(0.9246,1.000);transform-origin:0 50%;">WECON</div>
<div class="t" style="left:524.50px;top:306.75px;font-size:12.5px;line-height:18.5px;color:#000;transform:scale(0.8159,1.000);transform-origin:0 50%;">...</div>
<div class="t" style="left:543.70px;top:306.75px;font-size:12.5px;line-height:18.5px;color:#000;transform:scale(0.9493,1.000);transform-origin:0 50%;">Revisio...</div>
<div class="t" style="left:603.50px;top:306.75px;font-size:12.5px;line-height:18.5px;color:#000;transform:scale(0.9657,1.000);transform-origin:0 50%;">EtherCAT</div>
<div class="t" style="left:660.50px;top:306.75px;font-size:12.5px;line-height:18.5px;color:#000;transform:scale(0.9562,1.000);transform-origin:0 50%;">Slave</div>
<div class="t" style="left:695.20px;top:306.75px;font-size:12.5px;line-height:18.5px;color:#000;transform:scale(1.0425,1.000);transform-origin:0 50%;">imported</div>
<div class="t" style="left:752.20px;top:306.75px;font-size:12.5px;line-height:18.5px;color:#000;">from</div>
<div class="t" style="left:783.50px;top:306.75px;font-size:12.5px;line-height:18.5px;color:#000;transform:scale(0.9370,1.000);transform-origin:0 50%;">Slave</div>
<div class="t" style="left:818.50px;top:306.75px;font-size:12.5px;line-height:18.5px;color:#000;transform:scale(0.9918,1.000);transform-origin:0 50%;">XML:LX6V-EMB-ECAT.xml</div>
<div class="t" style="left:970.90px;top:306.75px;font-size:12.5px;line-height:18.5px;color:#000;transform:scale(0.9130,1.000);transform-origin:0 50%;">De...</div>
<div class="r" style="left:319px;top:326px;width:681px;height:1px;background:#eeeeee;"></div>
<div class="t" style="left:323.00px;top:327.75px;font-size:12.5px;line-height:18.5px;color:#000;transform:scale(0.9935,1.000);transform-origin:0 50%;">LX6V-4DA(4 channels ...</div>
<div class="t" style="left:473.70px;top:327.75px;font-size:12.5px;line-height:18.5px;color:#000;transform:scale(0.9246,1.000);transform-origin:0 50%;">WECON</div>
<div class="t" style="left:524.50px;top:327.75px;font-size:12.5px;line-height:18.5px;color:#000;transform:scale(0.8159,1.000);transform-origin:0 50%;">...</div>
<div class="t" style="left:543.70px;top:327.75px;font-size:12.5px;line-height:18.5px;color:#000;transform:scale(0.9493,1.000);transform-origin:0 50%;">Revisio...</div>
<div class="t" style="left:603.50px;top:327.75px;font-size:12.5px;line-height:18.5px;color:#000;transform:scale(0.9657,1.000);transform-origin:0 50%;">EtherCAT</div>
<div class="t" style="left:660.50px;top:327.75px;font-size:12.5px;line-height:18.5px;color:#000;transform:scale(0.9562,1.000);transform-origin:0 50%;">Slave</div>
<div class="t" style="left:695.20px;top:327.75px;font-size:12.5px;line-height:18.5px;color:#000;transform:scale(1.0425,1.000);transform-origin:0 50%;">imported</div>
<div class="t" style="left:752.20px;top:327.75px;font-size:12.5px;line-height:18.5px;color:#000;">from</div>
<div class="t" style="left:783.50px;top:327.75px;font-size:12.5px;line-height:18.5px;color:#000;transform:scale(0.9370,1.000);transform-origin:0 50%;">Slave</div>
<div class="t" style="left:818.50px;top:327.75px;font-size:12.5px;line-height:18.5px;color:#000;transform:scale(0.9918,1.000);transform-origin:0 50%;">XML:LX6V-EMB-ECAT.xml</div>
<div class="t" style="left:970.90px;top:327.75px;font-size:12.5px;line-height:18.5px;color:#000;transform:scale(0.9130,1.000);transform-origin:0 50%;">De...</div>
<div class="r" style="left:319px;top:347px;width:681px;height:1px;background:#eeeeee;"></div>
<div class="t" style="left:323.00px;top:348.75px;font-size:12.5px;line-height:18.5px;color:#000;transform:scale(0.9685,1.000);transform-origin:0 50%;">LX6V-1616EXYT(16 cha...</div>
<div class="t" style="left:473.70px;top:348.75px;font-size:12.5px;line-height:18.5px;color:#000;transform:scale(0.9246,1.000);transform-origin:0 50%;">WECON</div>
<div class="t" style="left:524.50px;top:348.75px;font-size:12.5px;line-height:18.5px;color:#000;transform:scale(0.8159,1.000);transform-origin:0 50%;">...</div>
<div class="t" style="left:543.70px;top:348.75px;font-size:12.5px;line-height:18.5px;color:#000;transform:scale(0.9493,1.000);transform-origin:0 50%;">Revisio...</div>
<div class="t" style="left:603.50px;top:348.75px;font-size:12.5px;line-height:18.5px;color:#000;transform:scale(0.9657,1.000);transform-origin:0 50%;">EtherCAT</div>
<div class="t" style="left:660.50px;top:348.75px;font-size:12.5px;line-height:18.5px;color:#000;transform:scale(0.9562,1.000);transform-origin:0 50%;">Slave</div>
<div class="t" style="left:695.20px;top:348.75px;font-size:12.5px;line-height:18.5px;color:#000;transform:scale(1.0425,1.000);transform-origin:0 50%;">imported</div>
<div class="t" style="left:752.20px;top:348.75px;font-size:12.5px;line-height:18.5px;color:#000;">from</div>
<div class="t" style="left:783.50px;top:348.75px;font-size:12.5px;line-height:18.5px;color:#000;transform:scale(0.9370,1.000);transform-origin:0 50%;">Slave</div>
<div class="t" style="left:818.50px;top:348.75px;font-size:12.5px;line-height:18.5px;color:#000;transform:scale(0.9918,1.000);transform-origin:0 50%;">XML:LX6V-EMB-ECAT.xml</div>
<div class="t" style="left:970.90px;top:348.75px;font-size:12.5px;line-height:18.5px;color:#000;transform:scale(0.9130,1.000);transform-origin:0 50%;">De...</div>
<div class="r" style="left:319px;top:368px;width:681px;height:1px;background:#eeeeee;"></div>
<div class="t" style="left:323.00px;top:369.75px;font-size:12.5px;line-height:18.5px;color:#000;transform:scale(0.9831,1.000);transform-origin:0 50%;">LX6V-32EX(32 channel...</div>
<div class="t" style="left:473.70px;top:369.75px;font-size:12.5px;line-height:18.5px;color:#000;transform:scale(0.9246,1.000);transform-origin:0 50%;">WECON</div>
<div class="t" style="left:524.50px;top:369.75px;font-size:12.5px;line-height:18.5px;color:#000;transform:scale(0.8159,1.000);transform-origin:0 50%;">...</div>
<div class="t" style="left:543.70px;top:369.75px;font-size:12.5px;line-height:18.5px;color:#000;transform:scale(0.9493,1.000);transform-origin:0 50%;">Revisio...</div>
<div class="t" style="left:603.50px;top:369.75px;font-size:12.5px;line-height:18.5px;color:#000;transform:scale(0.9657,1.000);transform-origin:0 50%;">EtherCAT</div>
<div class="t" style="left:660.50px;top:369.75px;font-size:12.5px;line-height:18.5px;color:#000;transform:scale(0.9562,1.000);transform-origin:0 50%;">Slave</div>
<div class="t" style="left:695.20px;top:369.75px;font-size:12.5px;line-height:18.5px;color:#000;transform:scale(1.0425,1.000);transform-origin:0 50%;">imported</div>
<div class="t" style="left:752.20px;top:369.75px;font-size:12.5px;line-height:18.5px;color:#000;">from</div>
<div class="t" style="left:783.50px;top:369.75px;font-size:12.5px;line-height:18.5px;color:#000;transform:scale(0.9370,1.000);transform-origin:0 50%;">Slave</div>
<div class="t" style="left:818.50px;top:369.75px;font-size:12.5px;line-height:18.5px;color:#000;transform:scale(0.9918,1.000);transform-origin:0 50%;">XML:LX6V-EMB-ECAT.xml</div>
<div class="t" style="left:970.90px;top:369.75px;font-size:12.5px;line-height:18.5px;color:#000;transform:scale(0.9130,1.000);transform-origin:0 50%;">De...</div>
<div class="r" style="left:319px;top:389px;width:681px;height:1px;background:#eeeeee;"></div>
<div class="t" style="left:323.00px;top:390.75px;font-size:12.5px;line-height:18.5px;color:#000;transform:scale(0.9708,1.000);transform-origin:0 50%;">LX6V-32EYT(32 channe...</div>
<div class="t" style="left:473.70px;top:390.75px;font-size:12.5px;line-height:18.5px;color:#000;transform:scale(0.9246,1.000);transform-origin:0 50%;">WECON</div>
<div class="t" style="left:524.50px;top:390.75px;font-size:12.5px;line-height:18.5px;color:#000;transform:scale(0.8159,1.000);transform-origin:0 50%;">...</div>
<div class="t" style="left:543.70px;top:390.75px;font-size:12.5px;line-height:18.5px;color:#000;transform:scale(0.9493,1.000);transform-origin:0 50%;">Revisio...</div>
<div class="t" style="left:603.50px;top:390.75px;font-size:12.5px;line-height:18.5px;color:#000;transform:scale(0.9657,1.000);transform-origin:0 50%;">EtherCAT</div>
<div class="t" style="left:660.50px;top:390.75px;font-size:12.5px;line-height:18.5px;color:#000;transform:scale(0.9562,1.000);transform-origin:0 50%;">Slave</div>
<div class="t" style="left:695.20px;top:390.75px;font-size:12.5px;line-height:18.5px;color:#000;transform:scale(1.0425,1.000);transform-origin:0 50%;">imported</div>
<div class="t" style="left:752.20px;top:390.75px;font-size:12.5px;line-height:18.5px;color:#000;">from</div>
<div class="t" style="left:783.50px;top:390.75px;font-size:12.5px;line-height:18.5px;color:#000;transform:scale(0.9370,1.000);transform-origin:0 50%;">Slave</div>
<div class="t" style="left:818.50px;top:390.75px;font-size:12.5px;line-height:18.5px;color:#000;transform:scale(0.9918,1.000);transform-origin:0 50%;">XML:LX6V-EMB-ECAT.xml</div>
<div class="t" style="left:970.90px;top:390.75px;font-size:12.5px;line-height:18.5px;color:#000;transform:scale(0.9130,1.000);transform-origin:0 50%;">De...</div>
<div class="r" style="left:319px;top:410px;width:681px;height:1px;background:#eeeeee;"></div>
<div class="t" style="left:323.00px;top:411.75px;font-size:12.5px;line-height:18.5px;color:#000;transform:scale(0.9662,1.000);transform-origin:0 50%;">LX6V-16EYP(16 channe...</div>
<div class="t" style="left:473.70px;top:411.75px;font-size:12.5px;line-height:18.5px;color:#000;transform:scale(0.9246,1.000);transform-origin:0 50%;">WECON</div>
<div class="t" style="left:524.50px;top:411.75px;font-size:12.5px;line-height:18.5px;color:#000;transform:scale(0.8159,1.000);transform-origin:0 50%;">...</div>
<div class="t" style="left:543.70px;top:411.75px;font-size:12.5px;line-height:18.5px;color:#000;transform:scale(0.9493,1.000);transform-origin:0 50%;">Revisio...</div>
<div class="t" style="left:603.50px;top:411.75px;font-size:12.5px;line-height:18.5px;color:#000;transform:scale(0.9657,1.000);transform-origin:0 50%;">EtherCAT</div>
<div class="t" style="left:660.50px;top:411.75px;font-size:12.5px;line-height:18.5px;color:#000;transform:scale(0.9562,1.000);transform-origin:0 50%;">Slave</div>
<div class="t" style="left:695.20px;top:411.75px;font-size:12.5px;line-height:18.5px;color:#000;transform:scale(1.0425,1.000);transform-origin:0 50%;">imported</div>
<div class="t" style="left:752.20px;top:411.75px;font-size:12.5px;line-height:18.5px;color:#000;">from</div>
<div class="t" style="left:783.50px;top:411.75px;font-size:12.5px;line-height:18.5px;color:#000;transform:scale(0.9370,1.000);transform-origin:0 50%;">Slave</div>
<div class="t" style="left:818.50px;top:411.75px;font-size:12.5px;line-height:18.5px;color:#000;transform:scale(0.9918,1.000);transform-origin:0 50%;">XML:LX6V-EMB-ECAT.xml</div>
<div class="t" style="left:970.90px;top:411.75px;font-size:12.5px;line-height:18.5px;color:#000;transform:scale(0.9130,1.000);transform-origin:0 50%;">De...</div>
<div class="r" style="left:319px;top:431px;width:681px;height:1px;background:#eeeeee;"></div>
<div class="t" style="left:323.00px;top:432.75px;font-size:12.5px;line-height:18.5px;color:#000;transform:scale(0.9639,1.000);transform-origin:0 50%;">LX6V-1616EXYP(16 cha...</div>
<div class="t" style="left:473.70px;top:432.75px;font-size:12.5px;line-height:18.5px;color:#000;transform:scale(0.9246,1.000);transform-origin:0 50%;">WECON</div>
<div class="t" style="left:524.50px;top:432.75px;font-size:12.5px;line-height:18.5px;color:#000;transform:scale(0.8159,1.000);transform-origin:0 50%;">...</div>
<div class="t" style="left:543.70px;top:432.75px;font-size:12.5px;line-height:18.5px;color:#000;transform:scale(0.9493,1.000);transform-origin:0 50%;">Revisio...</div>
<div class="t" style="left:603.50px;top:432.75px;font-size:12.5px;line-height:18.5px;color:#000;transform:scale(0.9657,1.000);transform-origin:0 50%;">EtherCAT</div>
<div class="t" style="left:660.50px;top:432.75px;font-size:12.5px;line-height:18.5px;color:#000;transform:scale(0.9562,1.000);transform-origin:0 50%;">Slave</div>
<div class="t" style="left:695.20px;top:432.75px;font-size:12.5px;line-height:18.5px;color:#000;transform:scale(1.0425,1.000);transform-origin:0 50%;">imported</div>
<div class="t" style="left:752.20px;top:432.75px;font-size:12.5px;line-height:18.5px;color:#000;">from</div>
<div class="t" style="left:783.50px;top:432.75px;font-size:12.5px;line-height:18.5px;color:#000;transform:scale(0.9370,1.000);transform-origin:0 50%;">Slave</div>
<div class="t" style="left:818.50px;top:432.75px;font-size:12.5px;line-height:18.5px;color:#000;transform:scale(0.9918,1.000);transform-origin:0 50%;">XML:LX6V-EMB-ECAT.xml</div>
<div class="t" style="left:970.90px;top:432.75px;font-size:12.5px;line-height:18.5px;color:#000;transform:scale(0.9130,1.000);transform-origin:0 50%;">De...</div>
<div class="r" style="left:319px;top:452px;width:681px;height:1px;background:#eeeeee;"></div>
<div class="t" style="left:323.00px;top:453.75px;font-size:12.5px;line-height:18.5px;color:#000;transform:scale(1.0046,1.000);transform-origin:0 50%;">LX6V-8HC(Encoder inp...</div>
<div class="t" style="left:473.70px;top:453.75px;font-size:12.5px;line-height:18.5px;color:#000;transform:scale(0.9246,1.000);transform-origin:0 50%;">WECON</div>
<div class="t" style="left:524.50px;top:453.75px;font-size:12.5px;line-height:18.5px;color:#000;transform:scale(0.8159,1.000);transform-origin:0 50%;">...</div>
<div class="t" style="left:543.70px;top:453.75px;font-size:12.5px;line-height:18.5px;color:#000;transform:scale(0.9493,1.000);transform-origin:0 50%;">Revisio...</div>
<div class="t" style="left:603.50px;top:453.75px;font-size:12.5px;line-height:18.5px;color:#000;transform:scale(0.9657,1.000);transform-origin:0 50%;">EtherCAT</div>
<div class="t" style="left:660.50px;top:453.75px;font-size:12.5px;line-height:18.5px;color:#000;transform:scale(0.9562,1.000);transform-origin:0 50%;">Slave</div>
<div class="t" style="left:695.20px;top:453.75px;font-size:12.5px;line-height:18.5px;color:#000;transform:scale(1.0425,1.000);transform-origin:0 50%;">imported</div>
<div class="t" style="left:752.20px;top:453.75px;font-size:12.5px;line-height:18.5px;color:#000;">from</div>
<div class="t" style="left:783.50px;top:453.75px;font-size:12.5px;line-height:18.5px;color:#000;transform:scale(0.9370,1.000);transform-origin:0 50%;">Slave</div>
<div class="t" style="left:818.50px;top:453.75px;font-size:12.5px;line-height:18.5px;color:#000;transform:scale(0.9918,1.000);transform-origin:0 50%;">XML:LX6V-EMB-ECAT.xml</div>
<div class="t" style="left:970.90px;top:453.75px;font-size:12.5px;line-height:18.5px;color:#000;transform:scale(0.9130,1.000);transform-origin:0 50%;">De...</div>
<div class="r" style="left:319px;top:473px;width:681px;height:1px;background:#eeeeee;"></div>
<div class="t" style="left:323.00px;top:474.75px;font-size:12.5px;line-height:18.5px;color:#000;transform:scale(0.9859,1.000);transform-origin:0 50%;">LX6V-4PT(4 channels t...</div>
<div class="t" style="left:473.70px;top:474.75px;font-size:12.5px;line-height:18.5px;color:#000;transform:scale(0.9246,1.000);transform-origin:0 50%;">WECON</div>
<div class="t" style="left:524.50px;top:474.75px;font-size:12.5px;line-height:18.5px;color:#000;transform:scale(0.8159,1.000);transform-origin:0 50%;">...</div>
<div class="t" style="left:543.70px;top:474.75px;font-size:12.5px;line-height:18.5px;color:#000;transform:scale(0.9493,1.000);transform-origin:0 50%;">Revisio...</div>
<div class="t" style="left:603.50px;top:474.75px;font-size:12.5px;line-height:18.5px;color:#000;transform:scale(0.9657,1.000);transform-origin:0 50%;">EtherCAT</div>
<div class="t" style="left:660.50px;top:474.75px;font-size:12.5px;line-height:18.5px;color:#000;transform:scale(0.9562,1.000);transform-origin:0 50%;">Slave</div>
<div class="t" style="left:695.20px;top:474.75px;font-size:12.5px;line-height:18.5px;color:#000;transform:scale(1.0425,1.000);transform-origin:0 50%;">imported</div>
<div class="t" style="left:752.20px;top:474.75px;font-size:12.5px;line-height:18.5px;color:#000;">from</div>
<div class="t" style="left:783.50px;top:474.75px;font-size:12.5px;line-height:18.5px;color:#000;transform:scale(0.9370,1.000);transform-origin:0 50%;">Slave</div>
<div class="t" style="left:818.50px;top:474.75px;font-size:12.5px;line-height:18.5px;color:#000;transform:scale(0.9918,1.000);transform-origin:0 50%;">XML:LX6V-EMB-ECAT.xml</div>
<div class="t" style="left:970.90px;top:474.75px;font-size:12.5px;line-height:18.5px;color:#000;transform:scale(0.9130,1.000);transform-origin:0 50%;">De...</div>
<div class="r" style="left:319px;top:494px;width:681px;height:1px;background:#eeeeee;"></div>
<div class="t" style="left:323.00px;top:495.75px;font-size:12.5px;line-height:18.5px;color:#000;transform:scale(0.9881,1.000);transform-origin:0 50%;">LX6V-4TC(4 channels t...</div>
<div class="t" style="left:473.70px;top:495.75px;font-size:12.5px;line-height:18.5px;color:#000;transform:scale(0.9246,1.000);transform-origin:0 50%;">WECON</div>
<div class="t" style="left:524.50px;top:495.75px;font-size:12.5px;line-height:18.5px;color:#000;transform:scale(0.8159,1.000);transform-origin:0 50%;">...</div>
<div class="t" style="left:543.70px;top:495.75px;font-size:12.5px;line-height:18.5px;color:#000;transform:scale(0.9493,1.000);transform-origin:0 50%;">Revisio...</div>
<div class="t" style="left:603.50px;top:495.75px;font-size:12.5px;line-height:18.5px;color:#000;transform:scale(0.9657,1.000);transform-origin:0 50%;">EtherCAT</div>
<div class="t" style="left:660.50px;top:495.75px;font-size:12.5px;line-height:18.5px;color:#000;transform:scale(0.9562,1.000);transform-origin:0 50%;">Slave</div>
<div class="t" style="left:695.20px;top:495.75px;font-size:12.5px;line-height:18.5px;color:#000;transform:scale(1.0425,1.000);transform-origin:0 50%;">imported</div>
<div class="t" style="left:752.20px;top:495.75px;font-size:12.5px;line-height:18.5px;color:#000;">from</div>
<div class="t" style="left:783.50px;top:495.75px;font-size:12.5px;line-height:18.5px;color:#000;transform:scale(0.9370,1.000);transform-origin:0 50%;">Slave</div>
<div class="t" style="left:818.50px;top:495.75px;font-size:12.5px;line-height:18.5px;color:#000;transform:scale(0.9918,1.000);transform-origin:0 50%;">XML:LX6V-EMB-ECAT.xml</div>
<div class="t" style="left:970.90px;top:495.75px;font-size:12.5px;line-height:18.5px;color:#000;transform:scale(0.9130,1.000);transform-origin:0 50%;">De...</div>
<div class="r" style="left:319px;top:515px;width:681px;height:1px;background:#eeeeee;"></div>
<div class="r" style="left:469px;top:243px;width:1px;height:273px;background:#eeeeee;"></div>
<div class="r" style="left:539px;top:243px;width:1px;height:273px;background:#eeeeee;"></div>
<div class="r" style="left:599px;top:243px;width:1px;height:273px;background:#eeeeee;"></div>
<div class="r" style="left:999px;top:243px;width:1px;height:273px;background:#eeeeee;"></div>
<div class="r" style="left:943px;top:638px;width:87px;height:24px;background:#d6dbe9;"></div>
<div class="t" style="left:974.70px;top:640.25px;font-size:12.5px;line-height:18.5px;color:#000;">Add</div>
<div class="r" style="left:1054px;top:637px;width:88px;height:25px;background:#d9ddeb;border:1px solid #8f95a8;"></div>
<div class="t" style="left:1082.50px;top:640.25px;font-size:12.5px;line-height:18.5px;color:#000;transform:scale(0.9763,1.000);transform-origin:0 50%;">Close</div>
<div class="r" style="left:35px;top:489px;width:211.5px;height:26px;border:4px solid #149a9c;border-radius:6px;"></div>
<div class="r" style="left:5.5px;top:485.7px;width:31.0px;height:31.000000000000057px;background:#149a9c;border-radius:50%;"></div>
<div class="t" style="left:15.80px;top:489.00px;font-size:19px;line-height:25px;color:#ffffff;transform:scale(0.9842,1.000);transform-origin:0 50%;font-weight:bold;">1</div>
<div class="r" style="left:314px;top:471px;width:696.5px;height:25px;border:4px solid #149a9c;border-radius:6px;"></div>
<div class="r" style="left:285.0px;top:455.8px;width:31.0px;height:31.0px;background:#149a9c;border-radius:50%;"></div>
<div class="t" style="left:295.30px;top:459.10px;font-size:19px;line-height:25px;color:#ffffff;transform:scale(0.9842,1.000);transform-origin:0 50%;font-weight:bold;">2</div>
<div class="r" style="left:940px;top:635px;width:93px;height:30.5px;border:4px solid #149a9c;border-radius:6px;"></div>
<div class="r" style="left:917.0px;top:619.1px;width:31.0px;height:31.0px;background:#149a9c;border-radius:50%;"></div>
<div class="t" style="left:927.30px;top:622.40px;font-size:19px;line-height:25px;color:#ffffff;transform:scale(0.9842,1.000);transform-origin:0 50%;font-weight:bold;">3</div>
<div class="t" style="left:1297.00px;top:169.80px;font-size:10px;line-height:16px;color:#303030;transform:scale(0.9998,1.130);transform-origin:0 50%;font-family:'Liberation Mono', monospace;">Device</div>
<div class="t" style="left:1313.00px;top:185.80px;font-size:10px;line-height:16px;color:#303030;transform:scale(0.9998,1.130);transform-origin:0 50%;font-family:'Liberation Mono', monospace;">PLC host</div>
<div class="t" style="left:1329.00px;top:201.80px;font-size:10px;line-height:16px;color:#303030;transform:scale(0.9998,1.130);transform-origin:0 50%;font-family:'Liberation Mono', monospace;">LX6V-0808</div>
<div class="t" style="left:1313.00px;top:217.80px;font-size:10px;line-height:16px;color:#303030;transform:scale(0.9998,1.130);transform-origin:0 50%;font-family:'Liberation Mono', monospace;">Expansion module:</div>
<div class="t" style="left:1329.00px;top:233.80px;font-size:10px;line-height:16px;color:#303030;transform:scale(0.9998,1.130);transform-origin:0 50%;font-family:'Liberation Mono', monospace;">LX6V-16EX</div>
<div class="r" style="left:1318px;top:240px;width:7px;height:1px;background:#a0a0a0;"></div>
<div class="t" style="left:1329.00px;top:249.80px;font-size:10px;line-height:16px;color:#303030;transform:scale(0.9998,1.130);transform-origin:0 50%;font-family:'Liberation Mono', monospace;">LX6V-16EYT</div>
<div class="r" style="left:1318px;top:256px;width:7px;height:1px;background:#a0a0a0;"></div>
<div class="t" style="left:1329.00px;top:265.80px;font-size:10px;line-height:16px;color:#303030;transform:scale(0.9998,1.130);transform-origin:0 50%;font-family:'Liberation Mono', monospace;">LX6V-0808EXYT</div>
<div class="r" style="left:1318px;top:272px;width:7px;height:1px;background:#a0a0a0;"></div>
<div class="t" style="left:1329.00px;top:281.80px;font-size:10px;line-height:16px;color:#303030;transform:scale(0.9998,1.130);transform-origin:0 50%;font-family:'Liberation Mono', monospace;">LX6V-4AD</div>
<div class="r" style="left:1318px;top:288px;width:7px;height:1px;background:#a0a0a0;"></div>
<div class="t" style="left:1329.00px;top:297.80px;font-size:10px;line-height:16px;color:#303030;transform:scale(0.9998,1.130);transform-origin:0 50%;font-family:'Liberation Mono', monospace;">LX6V-4DA</div>
<div class="r" style="left:1318px;top:304px;width:7px;height:1px;background:#a0a0a0;"></div>
<div class="t" style="left:1329.00px;top:313.80px;font-size:10px;line-height:16px;color:#303030;transform:scale(0.9998,1.130);transform-origin:0 50%;font-family:'Liberation Mono', monospace;">LX6V-1616EXYP</div>
<div class="r" style="left:1318px;top:320px;width:7px;height:1px;background:#a0a0a0;"></div>
<div class="t" style="left:1329.00px;top:329.80px;font-size:10px;line-height:16px;color:#303030;transform:scale(0.9998,1.130);transform-origin:0 50%;font-family:'Liberation Mono', monospace;">LX6V-1616EXYT</div>
<div class="r" style="left:1318px;top:336px;width:7px;height:1px;background:#a0a0a0;"></div>
<div class="t" style="left:1329.00px;top:345.80px;font-size:10px;line-height:16px;color:#303030;transform:scale(0.9998,1.130);transform-origin:0 50%;font-family:'Liberation Mono', monospace;">LX6V-32EX</div>
<div class="r" style="left:1318px;top:352px;width:7px;height:1px;background:#a0a0a0;"></div>
<div class="t" style="left:1329.00px;top:361.80px;font-size:10px;line-height:16px;color:#303030;transform:scale(0.9998,1.130);transform-origin:0 50%;font-family:'Liberation Mono', monospace;">LX6V-32EYT</div>
<div class="r" style="left:1318px;top:368px;width:7px;height:1px;background:#a0a0a0;"></div>
<div class="t" style="left:1329.00px;top:377.80px;font-size:10px;line-height:16px;color:#303030;transform:scale(0.9998,1.130);transform-origin:0 50%;font-family:'Liberation Mono', monospace;">LX6V-16EYP</div>
<div class="r" style="left:1318px;top:384px;width:7px;height:1px;background:#a0a0a0;"></div>
<div class="t" style="left:1329.00px;top:393.80px;font-size:10px;line-height:16px;color:#303030;transform:scale(0.9998,1.130);transform-origin:0 50%;font-family:'Liberation Mono', monospace;">LX6V-4TC</div>
<div class="r" style="left:1318px;top:400px;width:7px;height:1px;background:#a0a0a0;"></div>
<div class="t" style="left:1329.00px;top:409.80px;font-size:10px;line-height:16px;color:#303030;transform:scale(0.9998,1.130);transform-origin:0 50%;font-family:'Liberation Mono', monospace;">LX6V-4PT</div>
<div class="r" style="left:1318px;top:416px;width:7px;height:1px;background:#a0a0a0;"></div>
<div class="r" style="left:1302px;top:197px;width:1px;height:20px;background:#b4b4b4;"></div>
<div class="r" style="left:1318px;top:208px;width:7px;height:1px;background:#a0a0a0;"></div>
<div class="r" style="left:1318px;top:199px;width:1px;height:10px;background:#a0a0a0;"></div>
<div class="r" style="left:1318px;top:232px;width:1px;height:185px;background:#a0a0a0;"></div>
<div class="r" style="left:1306px;top:192px;width:4px;height:1px;background:#a0a0a0;"></div>
<div class="r" style="left:1306px;top:224px;width:4px;height:1px;background:#a0a0a0;"></div>
<svg class="r" style="left:1281.7px;top:173.3px;" width="5.5" height="4.7" viewBox="0 0 5.5 4.7" preserveAspectRatio="none"><path d="M5.5 0V4.7H0Z" fill="#6a6a6a"/></svg>
<svg class="r" style="left:1297.7px;top:189.3px;" width="5.5" height="4.7" viewBox="0 0 5.5 4.7" preserveAspectRatio="none"><path d="M5.5 0V4.7H0Z" fill="#6a6a6a"/></svg>
<svg class="r" style="left:1297.7px;top:221.3px;" width="5.5" height="4.7" viewBox="0 0 5.5 4.7" preserveAspectRatio="none"><path d="M5.5 0V4.7H0Z" fill="#6a6a6a"/></svg>
<svg class="r" style="left:8px;top:8px;" width="15" height="15" viewBox="0 0 15 15" preserveAspectRatio="none"><rect x="0" y="0" width="15" height="15" fill="#24508f"/><path d="M2 4.6H5.2M5.2 2.8V6.4M7 2.8V6.4M7 4.6H10.5M10.5 1.2V8M8.2 8H12.4" stroke="#ffffff" stroke-width="1" fill="none"/><path d="M3 10.6H12L14.4 14.4H0.6Z" fill="#f4f7fb"/><path d="M4.5 12.6H10.5" stroke="#24508f" stroke-width="1.3" stroke-dasharray="1.4 0.7"/><path d="M12.2 0.4V3.2" stroke="#cfe0f6" stroke-width="0.8"/></svg>
<svg class="r" style="left:38px;top:8px;" width="12" height="14" viewBox="0 0 12 14" preserveAspectRatio="none"><path d="M0.5 0.5H7.5L11 4V13.5H0.5Z" fill="#ffffff" stroke="#6d7078" stroke-width="1"/><path d="M7.5 0.5V4H11" fill="#dfe3ec" stroke="#6d7078" stroke-width="0.8"/><path d="M2 13L10.5 5V13Z" fill="#e8ebf2" opacity="0.8"/></svg>
<svg class="r" style="left:57px;top:8px;" width="17" height="15" viewBox="0 0 17 15" preserveAspectRatio="none"><path d="M0.5 13.5V3.5H5L6.5 5H12.5V7" fill="#f7df8a" stroke="#a07a1c" stroke-width="1"/><path d="M0.5 13.5L3.5 7H16L13 13.5Z" fill="#f3c747" stroke="#a07a1c" stroke-width="1"/><path d="M10 2.5C11.5 0.8 13.8 1 14.8 2.6M15.3 0.6V3H13" stroke="#6a6a6a" stroke-width="0.9" fill="none"/></svg>
<svg class="r" style="left:80px;top:8px;" width="14" height="14" viewBox="0 0 14 14" preserveAspectRatio="none"><rect x="0.5" y="0.5" width="13" height="13" fill="#3d4fd0" stroke="#1c2a8a"/><rect x="2.5" y="0.5" width="8.5" height="6" fill="#f0f2fa"/><rect x="3.5" y="9" width="7" height="4.5" fill="#1b2266"/><rect x="4.5" y="10" width="2" height="2.8" fill="#e5e8f5"/></svg>
<svg class="r" style="left:101px;top:8px;" width="17" height="15" viewBox="0 0 17 15" preserveAspectRatio="none"><rect x="0.5" y="0.5" width="12" height="13" fill="#3d4fd0" stroke="#1c2a8a"/><rect x="2.5" y="0.5" width="8" height="6" fill="#f0f2fa"/><path d="M3.5 2.5H9M3.5 4.2H9" stroke="#666" stroke-width="0.7"/><rect x="3" y="9" width="6" height="4.5" fill="#1b2266"/><path d="M5.5 4.5L7.5 3L15.5 11.5L13.5 13.3Z" fill="#e9b94e" stroke="#8d6410" stroke-width="0.6"/><path d="M13.5 13.3L15.5 11.5L16 14Z" fill="#e26a5a"/></svg>
<svg class="r" style="left:123px;top:8px;" width="16" height="14" viewBox="0 0 16 14" preserveAspectRatio="none"><path d="M0.5 13.5V4H5L6.5 5.5H13.5V13.5Z" fill="#f4d25d" stroke="#a07a1c" stroke-width="1"/><path d="M0.5 7H13.5" stroke="#f9e8a0" stroke-width="1.2"/><path d="M11.5 3.8L15 0.6M12.6 0.5H15.2V3" stroke="#4a4a4a" stroke-width="1" fill="none"/></svg>
<svg class="r" style="left:147px;top:10px;" width="12" height="11" viewBox="0 0 12 11" preserveAspectRatio="none"><path d="M0.8 3.2H7.2C10 3.2 10.6 6.4 9 8.2C8 9.4 6.6 9.8 5.4 9.9" stroke="#b0b4c2" stroke-width="2" fill="none"/><path d="M4 0.2L0.4 3.2L4 6.2" stroke="#b0b4c2" stroke-width="1.8" fill="none"/></svg>
<svg class="r" style="left:170px;top:10px;" width="12" height="11" viewBox="0 0 12 11" preserveAspectRatio="none"><path d="M11.2 3.2H4.8C2 3.2 1.4 6.4 3 8.2C4 9.4 5.4 9.8 6.6 9.9" stroke="#b0b4c2" stroke-width="2" fill="none"/><path d="M8 0.2L11.6 3.2L8 6.2" stroke="#b0b4c2" stroke-width="1.8" fill="none"/></svg>
<svg class="r" style="left:189px;top:12px;" width="7" height="7" viewBox="0 0 7 7" preserveAspectRatio="none"><path d="M0 0.5H7" stroke="#6a6e7a" stroke-width="1"/><path d="M0 2.5H7L3.5 6.2Z" fill="#6a6e7a"/></svg>
<svg class="r" style="left:17px;top:59px;" width="16" height="16" viewBox="0 0 16 16" preserveAspectRatio="none"><rect x="0" y="8.6" width="16" height="7.4" rx="1" fill="#0e4c63"/><path d="M0 0.8H16" stroke="#0e4c63" stroke-width="1.6"/><path d="M0 3.4H14M2 6.2H16" stroke="#0e4c63" stroke-width="1.2"/><path d="M12.4 1.6L15.6 3.4L12.4 5.2ZM3.6 4.4L0.4 6.2L3.6 8Z" fill="#0e4c63"/><text x="8" y="14.9" font-size="6.6" font-weight="bold" text-anchor="middle" fill="#fff" font-family="Liberation Sans" textLength="12" lengthAdjust="spacingAndGlyphs">PLC</text></svg>
<svg class="r" style="left:17px;top:81px;" width="16" height="16" viewBox="0 0 16 16" preserveAspectRatio="none"><rect x="0" y="0" width="16" height="16" rx="1.5" fill="#0e4c63"/><text x="8" y="12" font-size="10.5" font-weight="bold" text-anchor="middle" fill="#fff" font-family="Liberation Sans" textLength="12.5" lengthAdjust="spacingAndGlyphs">3V</text></svg>
<svg class="r" style="left:148px;top:59px;" width="16" height="16" viewBox="0 0 16 16" preserveAspectRatio="none"><rect x="0.5" y="0.5" width="8" height="10" fill="#c9ccd6" stroke="#b3b6c2"/><rect x="5.5" y="3.5" width="9.5" height="12" fill="#f4f5f9" stroke="#b3b6c2"/><path d="M8 7.5H13M8 10H13M8 12.5H13" stroke="#b0b3bf" stroke-width="1"/></svg>
<svg class="r" style="left:148px;top:80px;" width="16" height="17" viewBox="0 0 16 17" preserveAspectRatio="none"><path d="M1 0.5L11 12M15 0.5L5 12" stroke="#a3a6b0" stroke-width="2.2" fill="none"/><circle cx="3.4" cy="13.3" r="2.6" fill="#f4f5f9" stroke="#a8abb6" stroke-width="1"/><circle cx="12.6" cy="13.3" r="2.6" fill="#f4f5f9" stroke="#a8abb6" stroke-width="1"/></svg>
<svg class="r" style="left:148px;top:103px;" width="16" height="16" viewBox="0 0 16 16" preserveAspectRatio="none"><rect x="0.5" y="0.5" width="9" height="11" fill="#f1f2f6" stroke="#b3b6c2"/><path d="M2 3H6M2 5.5H6M2 8H6" stroke="#b0b3bf" stroke-width="0.9"/><rect x="5.5" y="3.5" width="10" height="12" fill="#c4c7d1" stroke="#b3b6c2"/></svg>
<svg class="r" style="left:203px;top:62px;" width="12" height="11" viewBox="0 0 12 11" preserveAspectRatio="none"><path d="M0.8 3.2H7.2C10 3.2 10.6 6.4 9 8.2C8 9.4 6.6 9.8 5.4 9.9" stroke="#b4b8c5" stroke-width="2" fill="none"/><path d="M4 0.2L0.4 3.2L4 6.2" stroke="#b4b8c5" stroke-width="1.8" fill="none"/></svg>
<svg class="r" style="left:204px;top:84px;" width="12" height="11" viewBox="0 0 12 11" preserveAspectRatio="none"><path d="M11.2 3.2H4.8C2 3.2 1.4 6.4 3 8.2C4 9.4 5.4 9.8 6.6 9.9" stroke="#b4b8c5" stroke-width="2" fill="none"/><path d="M8 0.2L11.6 3.2L8 6.2" stroke="#b4b8c5" stroke-width="1.8" fill="none"/></svg>
<svg class="r" style="left:453px;top:59.5px;" width="17" height="16" viewBox="0 0 17 16" preserveAspectRatio="none"><path d="M1 1.5H14.5V10.5H6L3 13.5V10.5H1Z" fill="#f7fafb" stroke="#0e4c63" stroke-width="1.3"/><path d="M3.5 4.7H9.5M3.5 7.5H9" stroke="#0e4c63" stroke-width="1.4"/><path d="M12.5 0.6L16 1.6L13.6 12.2L10.6 13.4L10 11.2Z" fill="#e8e63a" stroke="#8f8e1a" stroke-width="0.6"/></svg>
<svg class="r" style="left:453px;top:80px;" width="17" height="17" viewBox="0 0 17 17" preserveAspectRatio="none"><path d="M0.8 3H4.5V1.5H9.5V3H12V16H0.8Z" fill="#a9acb6"/><path d="M11 4L16 3.5L14 16H11Z" fill="#b9bcc6"/><path d="M3 8H9M3 11.5H9" stroke="#e4e6ee" stroke-width="1.6"/></svg>
<svg class="r" style="left:565px;top:58px;" width="17" height="18" viewBox="0 0 17 18" preserveAspectRatio="none"><rect x="0.5" y="0.5" width="16" height="16" fill="#f4f5fa" stroke="#c9ccd6"/><path d="M2 2.5H15M2 5H15" stroke="#b6bac6" stroke-width="1" stroke-dasharray="1 1.4"/><path d="M2 13H15M2 15.2H15" stroke="#b6bac6" stroke-width="1" stroke-dasharray="1 1.4"/><path d="M8.5 2V10M6.2 8L8.5 10.6L10.8 8" stroke="#a3a7b3" stroke-width="1.1" fill="none"/><path d="M0 17H17" stroke="#a3a7b3" stroke-width="1"/></svg>
<svg class="r" style="left:565px;top:80px;" width="17" height="17" viewBox="0 0 17 17" preserveAspectRatio="none"><rect x="0.5" y="0.5" width="5.5" height="5.5" fill="#a9acb6"/><circle cx="13" cy="13" r="3.4" fill="#b3b6c0"/><path d="M6.5 2.5C11 2 14 5 13.8 9M2.8 6.5C2.5 11 5.5 14 9.5 13.8" stroke="#a9acb6" stroke-width="1.1" fill="none"/><path d="M12 7.5L13.8 9.6L15.6 7.5" stroke="#a9acb6" stroke-width="1" fill="none"/></svg>
<svg class="r" style="left:565px;top:102px;" width="17" height="18" viewBox="0 0 17 18" preserveAspectRatio="none"><rect x="0.5" y="0.5" width="16" height="16" fill="#ffffff" stroke="#c9ccd6"/><path d="M2 2.5H15M2 5H15" stroke="#333" stroke-width="1" stroke-dasharray="1 1.4"/><path d="M2 13H15M2 15.2H15" stroke="#333" stroke-width="1" stroke-dasharray="1 1.4"/><path d="M5.5 2V10M3.3 7.6L5.5 10.6L7.7 7.6M11.5 2V10M9.3 7.6L11.5 10.6L13.7 7.6" stroke="#0e4c63" stroke-width="1.6" fill="none"/><path d="M0 17H17" stroke="#0e4c63" stroke-width="1.2"/></svg>
<svg class="r" style="left:659px;top:58px;" width="17" height="18" viewBox="0 0 17 18" preserveAspectRatio="none"><rect x="0.5" y="1.5" width="15" height="15" fill="#f3f3ee" stroke="#8f8f6a" stroke-width="0.8" stroke-dasharray="1.5 1"/><path d="M7.5 2V16M9.5 2V16M1 9H8" stroke="#8fa3b0" stroke-width="1.1"/><circle cx="8.5" cy="9" r="1.2" fill="#f3f3ee" stroke="#8fa3b0" stroke-width="0.7"/><path d="M12 1.6L15.2 2.2L13.2 13L11.2 16L10 12.6Z" fill="#eef000" stroke="#9a9a20" stroke-width="0.5"/></svg>
<svg class="r" style="left:659px;top:80px;" width="16" height="17" viewBox="0 0 16 17" preserveAspectRatio="none"><ellipse cx="8" cy="7" rx="7.4" ry="6.8" fill="#eef0f4" stroke="#8b8f9a" stroke-width="1"/><circle cx="8" cy="7" r="3.6" fill="#7fc4e6" stroke="#4a7f9c" stroke-width="1"/><path d="M3 13.5L1.5 16.5H14.5L13 13.5Z" fill="#c9ccd4" stroke="#8b8f9a" stroke-width="0.8"/></svg>
<svg class="r" style="left:659px;top:102px;" width="17" height="17" viewBox="0 0 17 17" preserveAspectRatio="none"><ellipse cx="7" cy="7" rx="5.8" ry="5.6" fill="#e6e8ee" stroke="#9a9ea8" stroke-width="1"/><circle cx="7" cy="7" r="2.6" fill="#c0c4cc"/><path d="M2 12.5L0.5 16.5H12L11 12.5Z" fill="#55585f" stroke="#333" stroke-width="0.6"/><path d="M13.5 1L16 3.5L8.5 11.5L5.6 12L6.2 9.2Z" fill="#8db7ea" stroke="#5b86c0" stroke-width="0.6"/></svg>
<svg class="r" style="left:787px;top:58px;" width="17" height="17" viewBox="0 0 17 17" preserveAspectRatio="none"><path d="M1 2.8H12M3.6 0.6L1 2.8L3.6 5" stroke="#2ecc52" stroke-width="1.2" fill="none"/><path d="M2 6.5H9" stroke="#2ecc52" stroke-width="1.2"/><circle cx="11.5" cy="12" r="3.6" fill="none" stroke="#0e4c63" stroke-width="2.6" stroke-dasharray="2.2 1.3"/><circle cx="11.5" cy="12" r="3" fill="#0e4c63"/><circle cx="11.5" cy="12" r="1.3" fill="#d6dbe9"/></svg>
<svg class="r" style="left:787px;top:80px;" width="16" height="17" viewBox="0 0 16 17" preserveAspectRatio="none"><path d="M8 12V2M3.6 6L8 1.4L12.4 6" stroke="#2ecc52" stroke-width="2.2" fill="none"/><path d="M0.5 15.5H15.5" stroke="#2ecc52" stroke-width="2"/></svg>
<svg class="r" style="left:787px;top:102px;" width="16" height="17" viewBox="0 0 16 17" preserveAspectRatio="none"><path d="M8 1V11M3.6 7L8 11.6L12.4 7" stroke="#1f7fe8" stroke-width="2.2" fill="none"/><path d="M0.5 15.5H15.5" stroke="#1f7fe8" stroke-width="2"/></svg>
<svg class="r" style="left:908px;top:59px;" width="16" height="16" viewBox="0 0 16 16" preserveAspectRatio="none"><rect x="0.5" y="0.5" width="15" height="15" fill="#f4f8f8" stroke="#0e4c63"/><rect x="0.5" y="9" width="15" height="6.5" fill="#0e4c63"/><text x="8" y="14.7" font-size="6" font-weight="bold" text-anchor="middle" fill="#fff" font-family="Liberation Sans" textLength="11" lengthAdjust="spacingAndGlyphs">PLC</text><path d="M3.5 4.5L6.5 7.5L13 1.2" stroke="#2ecc52" stroke-width="1.8" fill="none"/></svg>
<svg class="r" style="left:908px;top:81px;" width="16" height="16" viewBox="0 0 16 16" preserveAspectRatio="none"><rect x="0.5" y="0.5" width="15" height="15" fill="#f4f8f8" stroke="#0e4c63"/><rect x="0.5" y="9" width="15" height="6.5" fill="#0e4c63"/><text x="8" y="14.7" font-size="6" font-weight="bold" text-anchor="middle" fill="#fff" font-family="Liberation Sans" textLength="11" lengthAdjust="spacingAndGlyphs">PLC</text><circle cx="5.5" cy="4.5" r="2.3" fill="none" stroke="#0e4c63" stroke-width="1.3"/><path d="M7.5 5.5L13 7.2" stroke="#0e4c63" stroke-width="1.5"/></svg>
<svg class="r" style="left:908px;top:103px;" width="17" height="17" viewBox="0 0 17 17" preserveAspectRatio="none"><path d="M0.5 10L11 7L7.5 16.5L6 11.8Z" fill="#0e4c63"/><path d="M8 3.5C11 3 13.5 5 13.6 8M8.5 0.8C12.8 0.2 16.2 3.4 16 7.6" stroke="#2ecc52" stroke-width="1.5" fill="none"/></svg>
<svg class="r" style="left:938px;top:58px;" width="17" height="17" viewBox="0 0 17 17" preserveAspectRatio="none"><rect x="1.5" y="1.5" width="14" height="14" fill="#0e4c63"/><path d="M3.5 0V17M6 0V17M8.5 0V17M11 0V17M13.5 0V17M0 3.5H17M0 6H17M0 8.5H17M0 11H17M0 13.5H17" stroke="#0e4c63" stroke-width="1"/><rect x="2.5" y="2.5" width="12" height="12" fill="#0e4c63"/><circle cx="7.6" cy="7.4" r="2.7" fill="#4fd6c8"/><path d="M9.5 9.5L13 13" stroke="#dff" stroke-width="1.4"/></svg>
<svg class="r" style="left:938px;top:81px;" width="16" height="16" viewBox="0 0 16 16" preserveAspectRatio="none"><rect x="0" y="0" width="7" height="7" rx="1" fill="#a6a9b3"/><rect x="0" y="9" width="7" height="7" rx="1" fill="#a6a9b3"/><rect x="9" y="9" width="7" height="7" rx="1" fill="#a6a9b3"/><circle cx="11.6" cy="3.4" r="2.6" fill="#f2f3f7" stroke="#b9bcc6" stroke-width="1"/><path d="M13.5 5.5L16 8" stroke="#b9bcc6" stroke-width="1.3"/></svg>
<svg class="r" style="left:938px;top:102px;" width="16" height="17" viewBox="0 0 16 17" preserveAspectRatio="none"><path d="M1 4.5H15" stroke="#0e4c63" stroke-width="2.2"/><path d="M5.5 3V1H10.5V3" stroke="#0e4c63" stroke-width="1.4" fill="none"/><path d="M2.5 6.5H13.5L12.8 17H3.2Z" fill="#0e4c63"/><path d="M5.6 9V15M8 9V15M10.4 9V15" stroke="#d6dbe9" stroke-width="0.9"/></svg>
<svg class="r" style="left:1070px;top:58px;" width="17" height="17" viewBox="0 0 17 17" preserveAspectRatio="none"><circle cx="8.5" cy="8.5" r="7.6" fill="#ffffff" stroke="#3c5a66" stroke-width="1.2"/><path d="M8.5 3.5V8.8" stroke="#d22" stroke-width="1.3"/><path d="M8.5 8.8L12.5 12.5" stroke="#d22" stroke-width="1.3"/></svg>
<svg class="r" style="left:1193px;top:58px;" width="17" height="17" viewBox="0 0 17 17" preserveAspectRatio="none"><circle cx="8.5" cy="8.5" r="7.5" fill="none" stroke="#c2c5cf" stroke-width="1.1"/><rect x="4" y="4" width="7" height="7" fill="#d2d5de" stroke="#b5b8c3"/><rect x="6" y="6" width="7" height="7" fill="#dcdfe8" stroke="#b5b8c3"/></svg>
<svg class="r" style="left:1193px;top:79px;" width="17" height="18" viewBox="0 0 17 18" preserveAspectRatio="none"><path d="M4.5 7V4.6C4.5 0.4 12.5 0.4 12.5 4.6V7" stroke="#0e4c63" stroke-width="1.5" fill="none"/><rect x="1" y="6.5" width="15" height="10" rx="1.4" fill="#eef4f6" stroke="#0e4c63" stroke-width="1.6"/><text x="8.5" y="14.3" font-size="6.3" font-weight="bold" text-anchor="middle" fill="#0e4c63" font-family="Liberation Sans" textLength="10.5" lengthAdjust="spacingAndGlyphs">PLC</text></svg>
<svg class="r" style="left:1193px;top:101px;" width="17" height="18" viewBox="0 0 17 18" preserveAspectRatio="none"><path d="M4.5 7V4.6C4.5 0.4 12.5 0.4 12.5 4.6V7" stroke="#0e4c63" stroke-width="1.5" fill="none"/><rect x="1" y="6.5" width="15" height="10" rx="1.4" fill="#eef4f6" stroke="#0e4c63" stroke-width="1.6"/><path d="M8.5 9.5V13.6" stroke="#0e4c63" stroke-width="1.5"/></svg>
<svg class="r" style="left:1318px;top:57px;" width="17" height="18" viewBox="0 0 17 18" preserveAspectRatio="none"><rect x="4.5" y="0.5" width="8" height="5" fill="#f0f4f6" stroke="#0e4c63" stroke-width="1"/><path d="M7 2.5V3.5M10 2.5V3.5" stroke="#0e4c63" stroke-width="1"/><rect x="0.5" y="4.5" width="16" height="13" fill="#0e4c63"/><path d="M8.5 7V14M5.6 11.4L8.5 14.8L11.4 11.4" stroke="#fff" stroke-width="1.8" fill="none"/></svg>
<svg class="r" style="left:1319px;top:80px;" width="16" height="16" viewBox="0 0 16 16" preserveAspectRatio="none"><path d="M2.5 0.5H12.5V12.5H2.5Z" fill="#f0f1f5" stroke="#b6b9c4"/><path d="M4.5 3.5H10.5M4.5 6H10.5M4.5 8.5H8" stroke="#c2c5cf" stroke-width="1"/><path d="M0.5 13.5H14.5V15.5H0.5Z" fill="#b9bcc6"/><path d="M9 10H13M11.5 8.2L13.4 10L11.5 11.8" stroke="#b0b3be" stroke-width="1" fill="none"/></svg>
<svg class="r" style="left:1318px;top:102px;" width="17" height="17" viewBox="0 0 17 17" preserveAspectRatio="none"><rect x="0.5" y="0.5" width="16" height="16" fill="#f1f2f6" stroke="#c6c9d3"/><path d="M3 5H7M5 3V7M10 5H14M3.4 10.2L6.6 13.4M6.6 10.2L3.4 13.4M10 10.6H14M10 13H14" stroke="#a9acb7" stroke-width="1" fill="none"/></svg>
<svg class="r" style="left:1353px;top:58px;" width="17" height="17" viewBox="0 0 17 17" preserveAspectRatio="none"><path d="M2 13H13M3.2 13V7.5C3.2 2 11.8 2 11.8 7.5V13" stroke="#0e4c63" stroke-width="1.5" fill="none"/><path d="M5.5 15.5H9.5" stroke="#0e4c63" stroke-width="1.6"/><circle cx="12.6" cy="3.2" r="3" fill="#e0141e"/></svg>
<svg class="r" style="left:267px;top:59px;" width="16" height="17" viewBox="0 0 16 17" preserveAspectRatio="none"><path d="M0 3.5H5M5 0.5V6.5M11 0.5V6.5M11 3.5H16" stroke="#8f939f" stroke-width="1" fill="none"/><text x="8" y="16.2" font-size="9" text-anchor="middle" fill="#838896" font-family="Liberation Sans" textLength="10.5" lengthAdjust="spacingAndGlyphs">F5</text></svg>
<svg class="r" style="left:289px;top:59px;" width="16" height="17" viewBox="0 0 16 17" preserveAspectRatio="none"><path d="M0.5 0V3.5H4.5M4.5 0V6.5M6 6.5L10.5 0.5M11.5 0V6.5M11.5 3.5H15.5V0" stroke="#8f939f" stroke-width="1" fill="none"/><text x="8" y="16.2" font-size="9" text-anchor="middle" fill="#838896" font-family="Liberation Sans" textLength="14" lengthAdjust="spacingAndGlyphs">sF6</text></svg>
<svg class="r" style="left:311px;top:59px;" width="16" height="17" viewBox="0 0 16 17" preserveAspectRatio="none"><path d="M0 3.5H16" stroke="#8f939f" stroke-width="1" fill="none"/><text x="8" y="16.2" font-size="9" text-anchor="middle" fill="#838896" font-family="Liberation Sans" textLength="10.5" lengthAdjust="spacingAndGlyphs">F9</text></svg>
<svg class="r" style="left:333px;top:59px;" width="16" height="17" viewBox="0 0 16 17" preserveAspectRatio="none"><path d="M8 0V7M4 0.5L12 6.5M12 0.5L4 6.5" stroke="#8f939f" stroke-width="1" fill="none"/><text x="8" y="16.2" font-size="9" text-anchor="middle" fill="#838896" font-family="Liberation Sans" textLength="13" lengthAdjust="spacingAndGlyphs">cFII</text></svg>
<svg class="r" style="left:355px;top:59px;" width="16" height="17" viewBox="0 0 16 17" preserveAspectRatio="none"><path d="M0.5 0V3.5H4M4 0V6.5M8 6.5V0.5M6 2.5L8 0.3L10 2.5M12 0V6.5M12 3.5H15.5V0" stroke="#8f939f" stroke-width="1" fill="none"/><text x="8" y="16.2" font-size="9" text-anchor="middle" fill="#838896" font-family="Liberation Sans" textLength="15" lengthAdjust="spacingAndGlyphs">caF7</text></svg>
<svg class="r" style="left:377px;top:59px;" width="16" height="17" viewBox="0 0 16 17" preserveAspectRatio="none"><path d="M0 1H12M2.5 1V6H12" stroke="#8f939f" stroke-width="1" fill="none"/><text x="8" y="16.2" font-size="9" text-anchor="middle" fill="#838896" font-family="Liberation Sans" textLength="14" lengthAdjust="spacingAndGlyphs">sF9</text></svg>
<svg class="r" style="left:399px;top:59px;" width="16" height="17" viewBox="0 0 16 17" preserveAspectRatio="none"><path d="M8 0V6M5.8 3.8L8 6.4L10.2 3.8" stroke="#8f939f" stroke-width="1" fill="none"/><text x="8" y="16.2" font-size="9" text-anchor="middle" fill="#838896" font-family="Liberation Sans" textLength="15" lengthAdjust="spacingAndGlyphs">caF5</text></svg>
<svg class="r" style="left:421px;top:59px;" width="16" height="17" viewBox="0 0 16 17" preserveAspectRatio="none"><path d="M0 3.5H4.5M4.5 0.5H11.5V6.5H4.5ZM11.5 3.5H16" stroke="#8f939f" stroke-width="1" fill="none"/><text x="8" y="16.2" font-size="9" text-anchor="middle" fill="#838896" font-family="Liberation Sans" textLength="14" lengthAdjust="spacingAndGlyphs">cF2</text></svg>
<svg class="r" style="left:267px;top:81px;" width="16" height="17" viewBox="0 0 16 17" preserveAspectRatio="none"><path d="M0.5 0V3.5H4.5M4.5 0V6.5M11.5 0V6.5M11.5 3.5H15.5V0" stroke="#8f939f" stroke-width="1" fill="none"/><text x="8" y="16.2" font-size="9" text-anchor="middle" fill="#838896" font-family="Liberation Sans" textLength="14" lengthAdjust="spacingAndGlyphs">sF5</text></svg>
<svg class="r" style="left:289px;top:81px;" width="16" height="17" viewBox="0 0 16 17" preserveAspectRatio="none"><path d="M0 3.5H3M5.5 0.5L3 3.5L5.5 6.5M10.5 0.5L13 3.5L10.5 6.5M13 3.5H16" stroke="#8f939f" stroke-width="1" fill="none"/><text x="8" y="16.2" font-size="9" text-anchor="middle" fill="#838896" font-family="Liberation Sans" textLength="10.5" lengthAdjust="spacingAndGlyphs">F7</text></svg>
<svg class="r" style="left:311px;top:81px;" width="16" height="17" viewBox="0 0 16 17" preserveAspectRatio="none"><path d="M8 0V7" stroke="#8f939f" stroke-width="1" fill="none"/><text x="8" y="16.2" font-size="9" text-anchor="middle" fill="#838896" font-family="Liberation Sans" textLength="14" lengthAdjust="spacingAndGlyphs">FII</text></svg>
<svg class="r" style="left:333px;top:81px;" width="16" height="17" viewBox="0 0 16 17" preserveAspectRatio="none"><path d="M0 3.5H4M4 0V6.5M8 6.5V0.5M6 2.5L8 0.3L10 2.5M12 0V6.5M12 3.5H16" stroke="#8f939f" stroke-width="1" fill="none"/><text x="8" y="16.2" font-size="9" text-anchor="middle" fill="#838896" font-family="Liberation Sans" textLength="14" lengthAdjust="spacingAndGlyphs">sF7</text></svg>
<svg class="r" style="left:355px;top:81px;" width="16" height="17" viewBox="0 0 16 17" preserveAspectRatio="none"><path d="M0.5 0V3.5H4M4 0V6.5M8 0V6.2M6 4.2L8 6.5L10 4.2M12 0V6.5M12 3.5H15.5V0" stroke="#8f939f" stroke-width="1" fill="none"/><text x="8" y="16.2" font-size="9" text-anchor="middle" fill="#838896" font-family="Liberation Sans" textLength="15" lengthAdjust="spacingAndGlyphs">caF8</text></svg>
<svg class="r" style="left:377px;top:81px;" width="16" height="17" viewBox="0 0 16 17" preserveAspectRatio="none"><path d="M0 1H4M2 1V7M5 1L11 6.5M11 1L5 6.5M5 6.5H11M11 1H14" stroke="#8f939f" stroke-width="1" fill="none"/><text x="8" y="16.2" font-size="9" text-anchor="middle" fill="#838896" font-family="Liberation Sans" textLength="13" lengthAdjust="spacingAndGlyphs">sFII</text></svg>
<svg class="r" style="left:399px;top:81px;" width="16" height="17" viewBox="0 0 16 17" preserveAspectRatio="none"><path d="M0 3.5H4M4 0.5H12V6.5H4ZM6 2H10V5H6ZM12 3.5H16" stroke="#8f939f" stroke-width="1" fill="none"/><text x="8" y="16.2" font-size="9" text-anchor="middle" fill="#838896" font-family="Liberation Sans" textLength="10.5" lengthAdjust="spacingAndGlyphs">F2</text></svg>
<svg class="r" style="left:421px;top:81px;" width="16" height="17" viewBox="0 0 16 17" preserveAspectRatio="none"><path d="M0.5 0V3.5H4.5M4.5 0.5H11.5V6.5H4.5ZM11.5 3.5H15.5V0" stroke="#8f939f" stroke-width="1" fill="none"/><text x="8" y="16.2" font-size="9" text-anchor="middle" fill="#838896" font-family="Liberation Sans" textLength="15" lengthAdjust="spacingAndGlyphs">csF2</text></svg>
<svg class="r" style="left:267px;top:103px;" width="16" height="17" viewBox="0 0 16 17" preserveAspectRatio="none"><path d="M0 3.5H4M4 0V6.5M5.5 6.5L10 0.5M11 0V6.5M11 3.5H16" stroke="#8f939f" stroke-width="1" fill="none"/><text x="8" y="16.2" font-size="9" text-anchor="middle" fill="#838896" font-family="Liberation Sans" textLength="10.5" lengthAdjust="spacingAndGlyphs">F6</text></svg>
<svg class="r" style="left:289px;top:103px;" width="16" height="17" viewBox="0 0 16 17" preserveAspectRatio="none"><path d="M0 3.5H3M6 0.5H3.5V6.5H6M10 0.5H12.5V6.5H10M12.5 3.5H16" stroke="#8f939f" stroke-width="1" fill="none"/><text x="8" y="16.2" font-size="9" text-anchor="middle" fill="#838896" font-family="Liberation Sans" textLength="10.5" lengthAdjust="spacingAndGlyphs">F8</text></svg>
<svg class="r" style="left:311px;top:103px;" width="16" height="17" viewBox="0 0 16 17" preserveAspectRatio="none"><path d="M0 3.5H16M4 0.5L12 6.5M12 0.5L4 6.5" stroke="#8f939f" stroke-width="1" fill="none"/><text x="8" y="16.2" font-size="9" text-anchor="middle" fill="#838896" font-family="Liberation Sans" textLength="14" lengthAdjust="spacingAndGlyphs">cF9</text></svg>
<svg class="r" style="left:333px;top:103px;" width="16" height="17" viewBox="0 0 16 17" preserveAspectRatio="none"><path d="M0 3.5H4M4 0V6.5M8 0V6.2M6 4.2L8 6.5L10 4.2M12 0V6.5M12 3.5H16" stroke="#8f939f" stroke-width="1" fill="none"/><text x="8" y="16.2" font-size="9" text-anchor="middle" fill="#838896" font-family="Liberation Sans" textLength="14" lengthAdjust="spacingAndGlyphs">sF8</text></svg>
<svg class="r" style="left:355px;top:103px;" width="16" height="17" viewBox="0 0 16 17" preserveAspectRatio="none"><path d="M0 3.5H16M5 6.5L11 0.5" stroke="#8f939f" stroke-width="1" fill="none"/><text x="8" y="16.2" font-size="9" text-anchor="middle" fill="#838896" font-family="Liberation Sans" textLength="16.5" lengthAdjust="spacingAndGlyphs">cafII</text></svg>
<svg class="r" style="left:377px;top:103px;" width="16" height="17" viewBox="0 0 16 17" preserveAspectRatio="none"><path d="M8 7V0.8M5.8 3L8 0.4L10.2 3" stroke="#8f939f" stroke-width="1" fill="none"/><text x="8" y="16.2" font-size="9" text-anchor="middle" fill="#838896" font-family="Liberation Sans" textLength="14" lengthAdjust="spacingAndGlyphs">aF5</text></svg>
<svg class="r" style="left:399px;top:103px;" width="16" height="17" viewBox="0 0 16 17" preserveAspectRatio="none"><path d="M0.5 0V3.5H4M4 0.5H12V6.5H4ZM6 2H10V5H6ZM12 3.5H15.5V0" stroke="#8f939f" stroke-width="1" fill="none"/><text x="8" y="16.2" font-size="9" text-anchor="middle" fill="#838896" font-family="Liberation Sans" textLength="14" lengthAdjust="spacingAndGlyphs">sF2</text></svg>
<svg class="r" style="left:29px;top:170px;" width="16" height="16" viewBox="0 0 16 16" preserveAspectRatio="none"><path d="M8 -0.6L16 4L8 8.6L0 4ZM8 1.9L4.2 4L8 6.1L11.8 4Z" fill="#0e4c63" fill-rule="evenodd"/><path d="M0.4 7.6L8 11.8L15.6 7.6M0.4 11L8 15.2L15.6 11" stroke="#0e4c63" stroke-width="2.1" fill="none"/></svg>
<svg class="r" style="left:48px;top:188px;" width="16" height="16" viewBox="0 0 16 16" preserveAspectRatio="none"><rect x="1" y="1" width="14" height="14" fill="#e6eff1"/><path d="M0.5 3.5V0.5H3.5M6.5 0.5H9.5M12.5 0.5H15.5V3.5M15.5 6.5V9.5M15.5 12.5V15.5H12.5M9.5 15.5H6.5M3.5 15.5H0.5V12.5M0.5 9.5V6.5" stroke="#1d5a70" stroke-width="0.9" fill="none"/><rect x="3.5" y="2" width="9" height="12" fill="#f4f9fa" stroke="#7fa5b0" stroke-width="0.6"/><path d="M4.5 4.5H11.5M4.5 7H11.5M4.5 9.5H11.5M4.5 12H11.5" stroke="#2d6a7d" stroke-width="0.8"/></svg>
<svg class="r" style="left:67px;top:206px;" width="16" height="16" viewBox="0 0 16 16" preserveAspectRatio="none"><path d="M1 0.5H9.5L14 5V15.5H1Z" fill="#f1f7f8" stroke="#0e4c63" stroke-width="1"/><path d="M9.5 0.5V5H14" fill="#cfe1e5" stroke="#0e4c63" stroke-width="0.8"/><path d="M1.5 9H4.5M4.5 5.5V12.5M7.5 5.5V12.5M7.5 9H10" stroke="#0e4c63" stroke-width="1.6"/><rect x="8" y="9" width="7.6" height="6.8" fill="#2bb04a"/><path d="M9.4 12.2L11.2 14.2L14.4 10.4" stroke="#fff" stroke-width="1.4" fill="none"/></svg>
<svg class="r" style="left:48px;top:224px;" width="16" height="16" viewBox="0 0 16 16" preserveAspectRatio="none"><rect x="1" y="1" width="14" height="14" fill="#e6eff1"/><path d="M0.5 3.5V0.5H3.5M6.5 0.5H9.5M12.5 0.5H15.5V3.5M15.5 6.5V9.5M15.5 12.5V15.5H12.5M9.5 15.5H6.5M3.5 15.5H0.5V12.5M0.5 9.5V6.5" stroke="#1d5a70" stroke-width="0.9" fill="none"/><rect x="4.5" y="2" width="8" height="12" fill="#f4f9fa" stroke="#7fa5b0" stroke-width="0.6"/><path d="M5.5 4.5H11.5M5.5 7H11.5M5.5 9.5H11.5M5.5 12H11.5" stroke="#2d6a7d" stroke-width="0.8"/><rect x="6.5" y="6.5" width="9.5" height="9.5" fill="#0e4c63"/><text x="11.3" y="14.6" font-size="8.5" font-weight="bold" text-anchor="middle" fill="#fff" font-family="Liberation Sans">E</text></svg>
<svg class="r" style="left:48px;top:242px;" width="16" height="16" viewBox="0 0 16 16" preserveAspectRatio="none"><rect x="1" y="1" width="14" height="14" fill="#e6eff1"/><path d="M0.5 3.5V0.5H3.5M6.5 0.5H9.5M12.5 0.5H15.5V3.5M15.5 6.5V9.5M15.5 12.5V15.5H12.5M9.5 15.5H6.5M3.5 15.5H0.5V12.5M0.5 9.5V6.5" stroke="#1d5a70" stroke-width="0.9" fill="none"/><rect x="4.5" y="2" width="8" height="12" fill="#f4f9fa" stroke="#7fa5b0" stroke-width="0.6"/><path d="M5.5 4.5H11.5M5.5 7H11.5M5.5 9.5H11.5M5.5 12H11.5" stroke="#2d6a7d" stroke-width="0.8"/><rect x="6.5" y="6.5" width="9.5" height="9.5" fill="#0e4c63"/><text x="11.3" y="14.6" font-size="8.5" font-weight="bold" text-anchor="middle" fill="#fff" font-family="Liberation Sans">S</text></svg>
<svg class="r" style="left:48px;top:260px;" width="16" height="16" viewBox="0 0 16 16" preserveAspectRatio="none"><rect x="1" y="1" width="14" height="14" fill="#e6eff1"/><path d="M0.5 3.5V0.5H3.5M6.5 0.5H9.5M12.5 0.5H15.5V3.5M15.5 6.5V9.5M15.5 12.5V15.5H12.5M9.5 15.5H6.5M3.5 15.5H0.5V12.5M0.5 9.5V6.5" stroke="#1d5a70" stroke-width="0.9" fill="none"/><rect x="4.5" y="2" width="8" height="12" fill="#f4f9fa" stroke="#7fa5b0" stroke-width="0.6"/><path d="M5.5 4.5H11.5M5.5 7H11.5M5.5 9.5H11.5M5.5 12H11.5" stroke="#2d6a7d" stroke-width="0.8"/><rect x="6.5" y="6.5" width="9.5" height="9.5" fill="#0e4c63"/><text x="11.3" y="14.6" font-size="8.5" font-weight="bold" text-anchor="middle" fill="#fff" font-family="Liberation Sans">I</text></svg>
<svg class="r" style="left:48px;top:278px;" width="16" height="16" viewBox="0 0 16 16" preserveAspectRatio="none"><rect x="0.5" y="0.5" width="6" height="6" fill="#f1f5f7" stroke="#b9cdd3"/><rect x="9.5" y="0.5" width="6" height="6" fill="#f1f5f7" stroke="#b9cdd3"/><rect x="0.5" y="9.5" width="6" height="6" fill="#f1f5f7" stroke="#b9cdd3"/><circle cx="12.6" cy="12.4" r="3.7" fill="#0e4c63"/></svg>
<svg class="r" style="left:48px;top:296px;" width="16" height="16" viewBox="0 0 16 16" preserveAspectRatio="none"><defs><linearGradient id="fxg" x1="0" y1="0" x2="0" y2="1"><stop offset="0" stop-color="#eef5f8"/><stop offset="1" stop-color="#bcd3dc"/></linearGradient></defs><rect x="0.5" y="0.5" width="15" height="15" fill="url(#fxg)" stroke="#9fb9c4"/><text x="8" y="12" font-size="11" font-style="italic" font-weight="bold" text-anchor="middle" fill="#0e4c63" font-family="Liberation Serif">fx</text></svg>
<svg class="r" style="left:48px;top:314px;" width="16" height="16" viewBox="0 0 16 16" preserveAspectRatio="none"><path d="M3.5 0.2L6.8 2.8L3.8 6.2L0.5 3.6Z" fill="#0e4c63"/><path d="M7.5 4.5V13" stroke="#111" stroke-width="1.8"/><path d="M13.5 1.6L15.8 3.8L12.6 6.6L10.3 4.4Z" fill="#e8962a"/><path d="M13.5 10.4L15.8 12.6L12.6 15.4L10.3 13.2Z" fill="#e8962a"/></svg>
<svg class="r" style="left:48px;top:332px;" width="16" height="16" viewBox="0 0 16 16" preserveAspectRatio="none"><path d="M3.5 0.2L6.8 2.8L3.8 6.2L0.5 3.6Z" fill="#2fe02f"/><path d="M6 3.5H12M7.5 3.5V12.5H12" stroke="#bdbdbd" stroke-width="1.1" fill="none"/><path d="M13.5 1.6L15.8 3.8L12.6 6.4L10.3 4.2Z" fill="#1212d8"/><path d="M13.5 10.4L15.8 12.6L12.6 15.2L10.3 13Z" fill="#1212d8"/></svg>
<svg class="r" style="left:48px;top:350px;" width="16" height="16" viewBox="0 0 16 16" preserveAspectRatio="none"><circle cx="8" cy="8" r="7.2" fill="#eaf5f8" stroke="#0e4c63" stroke-width="1.3"/><path d="M3 5.5C5 4 6 6.5 8 5.5C9.5 4.8 9 3 10.5 2.2M2 10C4 9 5 11 6.5 10.2C8 9.5 9 10.5 8.6 12C8.3 13.3 9.6 13.6 10 15M10 8C11.5 7 13 8.5 15 8" stroke="#0e4c63" stroke-width="1" fill="none"/></svg>
<svg class="r" style="left:48px;top:368px;" width="16" height="16" viewBox="0 0 16 16" preserveAspectRatio="none"><path d="M3.5 0.2L6.8 2.8L3.8 6.2L0.5 3.6Z" fill="#0e4c63"/><path d="M7.5 4.5V13" stroke="#111" stroke-width="1.8"/><path d="M13.5 1.6L15.8 3.8L12.6 6.6L10.3 4.4Z" fill="#e8962a"/><path d="M13.5 10.4L15.8 12.6L12.6 15.4L10.3 13.2Z" fill="#e8962a"/></svg>
<svg class="r" style="left:29px;top:386px;" width="16" height="16" viewBox="0 0 16 16" preserveAspectRatio="none"><path d="M1 1.5H15V11.5H7L4 14.5V11.5H1Z" fill="#f3f8f9" stroke="#a9c6cd" stroke-width="1"/><path d="M4 5H12M4 8.2H12" stroke="#4d7f8e" stroke-width="1.2"/></svg>
<svg class="r" style="left:29px;top:404px;" width="16" height="16" viewBox="0 0 16 16" preserveAspectRatio="none"><path d="M0.8 14.5V1.5H6L7.5 3H15.2V14.5Z" fill="#e9f3f6" stroke="#0e4c63" stroke-width="1.2"/><path d="M0.8 5H15.2" stroke="#0e4c63" stroke-width="0.8"/><circle cx="11.2" cy="11" r="3.4" fill="#fff" stroke="#3d7080" stroke-width="1.5" stroke-dasharray="1.7 1"/><circle cx="11.2" cy="11" r="1.3" fill="none" stroke="#3d7080" stroke-width="0.9"/></svg>
<svg class="r" style="left:29px;top:422px;" width="16" height="16" viewBox="0 0 16 16" preserveAspectRatio="none"><path d="M0.5 0.5H15.5V15.5H0.5Z" fill="#7fb6bd"/><rect x="3.2" y="0.5" width="9.6" height="6.8" fill="#f3f7f7"/><rect x="8.8" y="1.8" width="1.3" height="3.3" fill="#f0a030"/></svg>
<svg class="r" style="left:29px;top:440px;" width="16" height="16" viewBox="0 0 16 16" preserveAspectRatio="none"><circle cx="8" cy="8" r="6.6" fill="#fff" stroke="#0e4c63" stroke-width="2.2"/><path d="M6.4 4.8L9.8 8L6.4 11.2" stroke="#0e4c63" stroke-width="1.8" fill="none"/></svg>
<svg class="r" style="left:48px;top:458px;" width="16" height="16" viewBox="0 0 16 16" preserveAspectRatio="none"><rect x="4.5" y="1" width="3.6" height="15" fill="#7fb6bd"/><circle cx="11.5" cy="4" r="2.7" fill="#fff" stroke="#2f6878" stroke-width="1.5" stroke-dasharray="1.3 0.9"/><circle cx="11.5" cy="4" r="1" fill="none" stroke="#2f6878" stroke-width="0.8"/></svg>
<svg class="r" style="left:29px;top:476px;" width="16" height="16" viewBox="0 0 16 16" preserveAspectRatio="none"><path d="M0.3 5H11" stroke="#0e4c63" stroke-width="2.6"/><path d="M9 0.2L16 5L9 7.6Z" fill="#0e4c63"/><path d="M5 11H15.8" stroke="#111" stroke-width="2.6"/><path d="M7 8.4L0 11L7 15.8Z" fill="#111"/></svg>
<svg class="r" style="left:48px;top:494px;" width="16" height="16" viewBox="0 0 16 16" preserveAspectRatio="none"><defs><linearGradient id="dv" x1="0" x2="1"><stop offset="0" stop-color="#f2f2f2"/><stop offset="0.5" stop-color="#bdbdbd"/><stop offset="1" stop-color="#8a8a8a"/></linearGradient></defs><rect x="1" y="1" width="6.5" height="14" fill="url(#dv)" stroke="#5a5a5a" stroke-width="0.6"/><rect x="7.5" y="1" width="6.5" height="14" fill="url(#dv)" stroke="#5a5a5a" stroke-width="0.6"/><rect x="2" y="1.8" width="4.5" height="3.4" fill="#202820"/><rect x="8.5" y="1.8" width="4.5" height="3.4" fill="#202820"/><rect x="3" y="2.8" width="2.4" height="2" fill="#38d24a"/><rect x="9.5" y="2.8" width="2.4" height="2" fill="#38d24a"/><path d="M14 2.5L15.5 1.5V14L14 15" fill="#6a6a6a"/></svg>
<svg class="r" style="left:29px;top:512px;" width="16" height="16" viewBox="0 0 16 16" preserveAspectRatio="none"><defs><linearGradient id="mg" x1="0" x2="1"><stop offset="0" stop-color="#444"/><stop offset="0.5" stop-color="#eee"/><stop offset="1" stop-color="#555"/></linearGradient></defs><rect x="1" y="2" width="7" height="13" fill="url(#mg)"/><rect x="3.5" y="0.5" width="2.4" height="3" fill="#888"/><rect x="0.5" y="14" width="8.5" height="1.8" fill="#555"/><rect x="10" y="10.5" width="5" height="5" fill="#e6e6e6" stroke="#888" stroke-width="0.7"/><path d="M10.8 11.3L14.2 14.7M14.2 11.3L10.8 14.7" stroke="#888" stroke-width="0.8"/></svg>
<svg class="r" style="left:29px;top:530px;" width="16" height="16" viewBox="0 0 16 16" preserveAspectRatio="none"><path d="M1 1.5L6 4L4 9Z" fill="#27505e"/><ellipse cx="9" cy="8" rx="6" ry="4.2" transform="rotate(25 9 8)" fill="#6fb0bd"/><ellipse cx="6.2" cy="6.6" rx="2.2" ry="3.6" transform="rotate(25 6.2 6.6)" fill="#a7d3db"/><path d="M10 9.5L15.5 13" stroke="#1d4f60" stroke-width="2"/></svg>
<svg class="r" style="left:29px;top:548px;" width="16" height="16" viewBox="0 0 16 16" preserveAspectRatio="none"><path d="M1 0V15H16M3.5 0V12.5H16M6 0V10H16" stroke="#0e4c63" stroke-width="0.9" fill="none"/><path d="M6.5 9.5L9.5 6.5H11.5L15.5 2.5" stroke="#e8962a" stroke-width="1.4" fill="none"/></svg>
<svg class="r" style="left:29px;top:566px;" width="16" height="16" viewBox="0 0 16 16" preserveAspectRatio="none"><defs><linearGradient id="ag" x1="0" y1="0" x2="1" y2="1"><stop offset="0" stop-color="#e6e6e6"/><stop offset="1" stop-color="#7d7d7d"/></linearGradient></defs><path d="M2.5 9C2.5 3 7 1 10.5 2.5" stroke="#9aa" stroke-width="1.2" fill="none"/><path d="M1 16V10.5H5V7.5H10V4H12V1H15.5V10H12V11.5H7V16Z" fill="url(#ag)"/><rect x="12.6" y="10" width="2.6" height="2.4" fill="#123f52"/></svg>
<svg class="r" style="left:29px;top:584px;" width="16" height="16" viewBox="0 0 16 16" preserveAspectRatio="none"><path d="M3.5 5.5V1.5H12.5V5.5" fill="#eef5f7" stroke="#8db8c2" stroke-width="1"/><rect x="0.8" y="5.5" width="14.4" height="9.5" rx="1.5" fill="#eef5f7" stroke="#8db8c2" stroke-width="1.1"/><rect x="3" y="8.5" width="10" height="4.5" rx="1" fill="#fff" stroke="#5f94a1" stroke-width="1"/><path d="M5.5 13V11M8 13V11M10.5 13V11" stroke="#5f94a1" stroke-width="0.9"/></svg>
<svg class="r" style="left:29px;top:602px;" width="16" height="16" viewBox="0 0 16 16" preserveAspectRatio="none"><path d="M1.5 0.5H10.5L14.5 4.5V15.5H1.5Z" fill="#f3f8f9" stroke="#0e4c63" stroke-width="1"/><path d="M4 3.5H9M4 5.8H11" stroke="#0e4c63" stroke-width="0.9"/><rect x="0.5" y="8.5" width="15.5" height="6.5" fill="#0e4c63"/><text x="8.2" y="14.2" font-size="6.4" font-weight="bold" text-anchor="middle" fill="#fff" font-family="Liberation Sans" textLength="12" lengthAdjust="spacingAndGlyphs">OPC</text></svg>
<svg class="r" style="left:48px;top:620px;" width="16" height="16" viewBox="0 0 16 16" preserveAspectRatio="none"><path d="M8 5L3 13M8 5L13 13" stroke="#e8e8e8" stroke-width="1.6"/><circle cx="8" cy="5" r="3.9" fill="#f7a325"/><circle cx="2.6" cy="13" r="2.2" fill="#f3e28a"/><circle cx="13.4" cy="13" r="2.2" fill="#4b8df0"/></svg>
<svg class="r" style="left:29px;top:638px;" width="16" height="16" viewBox="0 0 16 16" preserveAspectRatio="none"><path d="M8 1.2L9.8 1.4L10.4 3.2L12.2 2.4L13.6 3.8L12.8 5.6L14.6 6.2L14.8 8.2" stroke="#0e4c63" stroke-width="1.5" fill="none"/><path d="M8 1.2L6.2 1.4L5.6 3.2L3.8 2.4L2.4 3.8L3.2 5.6L1.4 6.2L1.2 8L1.4 9.8L3.2 10.4L2.4 12.2L3.8 13.6L5.6 12.8L6.2 14.6L8 14.8" stroke="#0e4c63" stroke-width="1.5" fill="none"/><path d="M10.6 6.2C9 4.4 5.6 5 5.2 8C5 10.4 7.5 11.6 9 10.6" stroke="#0e4c63" stroke-width="1.5" fill="none"/><path d="M10 10.5H16M10 12.7H16M10 14.9H16" stroke="#0e4c63" stroke-width="1.1"/></svg>
<svg class="r" style="left:48px;top:656px;" width="16" height="16" viewBox="0 0 16 16" preserveAspectRatio="none"><defs><linearGradient id="eg27" x1="0" x2="1"><stop offset="0" stop-color="#f4f4f4"/><stop offset="0.6" stop-color="#b5b5b5"/><stop offset="1" stop-color="#7c7c7c"/></linearGradient></defs><rect x="3" y="1" width="4.5" height="14" fill="url(#eg27)" stroke="#555" stroke-width="0.6"/><rect x="7.5" y="1" width="4.5" height="14" fill="url(#eg27)" stroke="#555" stroke-width="0.6"/><rect x="3.6" y="2.2" width="3.2" height="4.5" fill="#1f2a22"/><rect x="8.1" y="2.2" width="3.2" height="4.5" fill="#1f2a22"/><rect x="4.2" y="3" width="1.8" height="2" fill="#3bd44d"/><rect x="8.7" y="3" width="1.8" height="2" fill="#3bd44d"/><path d="M12 2L13 1.2V14.2L12 15" fill="#666"/></svg>
<svg class="r" style="left:48px;top:674px;" width="16" height="16" viewBox="0 0 16 16" preserveAspectRatio="none"><defs><linearGradient id="eg28" x1="0" x2="1"><stop offset="0" stop-color="#f4f4f4"/><stop offset="0.6" stop-color="#b5b5b5"/><stop offset="1" stop-color="#7c7c7c"/></linearGradient></defs><rect x="3" y="1" width="4.5" height="14" fill="url(#eg28)" stroke="#555" stroke-width="0.6"/><rect x="7.5" y="1" width="4.5" height="14" fill="url(#eg28)" stroke="#555" stroke-width="0.6"/><rect x="3.6" y="2.2" width="3.2" height="4.5" fill="#1f2a22"/><rect x="8.1" y="2.2" width="3.2" height="4.5" fill="#1f2a22"/><rect x="4.2" y="3" width="1.8" height="2" fill="#3bd44d"/><rect x="8.7" y="3" width="1.8" height="2" fill="#3bd44d"/><path d="M12 2L13 1.2V14.2L12 15" fill="#666"/></svg>
<svg class="r" style="left:198.7px;top:153.7px;" width="9.4" height="5.3" viewBox="0 0 9.4 5.3" preserveAspectRatio="none"><path d="M0 0H9.4L4.7 5.3Z" fill="#fff"/></svg>
<svg class="r" style="left:218.7px;top:151.0px;" width="7.4" height="9.4" viewBox="0 0 7.4 9.4" preserveAspectRatio="none"><path d="M1.9 0.5H5.5V5H1.9ZM4.6 0.5V5M0 5.2H7.4M3.7 5.2V9.4" stroke="#fff" stroke-width="1" fill="none"/></svg>
<svg class="r" style="left:237.7px;top:152.2px;" width="7.4" height="7.2" viewBox="0 0 7.4 7.2" preserveAspectRatio="none"><path d="M0.5 0.5L6.9 6.7M6.9 0.5L0.5 6.7" stroke="#fff" stroke-width="1.5" fill="none"/></svg>
<svg class="r" style="left:1387px;top:793.8px;" width="9.4" height="5.3" viewBox="0 0 9.4 5.3" preserveAspectRatio="none"><path d="M0 0H9.4L4.7 5.3Z" fill="#fff"/></svg>
<svg class="r" style="left:1407px;top:791.0999999999999px;" width="7.4" height="9.4" viewBox="0 0 7.4 9.4" preserveAspectRatio="none"><path d="M1.9 0.5H5.5V5H1.9ZM4.6 0.5V5M0 5.2H7.4M3.7 5.2V9.4" stroke="#fff" stroke-width="1" fill="none"/></svg>
<svg class="r" style="left:1426px;top:792.3px;" width="7.4" height="7.2" viewBox="0 0 7.4 7.2" preserveAspectRatio="none"><path d="M0.5 0.5L6.9 6.7M6.9 0.5L0.5 6.7" stroke="#fff" stroke-width="1.5" fill="none"/></svg>
<svg class="r" style="left:11.6px;top:815.3px;" width="11.4" height="15" viewBox="0 0 11.4 15" preserveAspectRatio="none"><rect x="0" y="0" width="11.4" height="15" fill="#e6f4f4"/><rect x="0" y="0" width="11.4" height="3.3" fill="#0e4c63"/><path d="M0.4 3.3V14.6H11V3.3" stroke="#c9e2e2" stroke-width="0.8" fill="none"/><path d="M2 6.6H9.4" stroke="#7f9a9a" stroke-width="1.2"/><path d="M2 9.4H9.4" stroke="#2f6f7a" stroke-width="1.2"/><path d="M2 12.2H9.4" stroke="#234a55" stroke-width="1.2"/></svg>
<svg class="r" style="left:146.6px;top:815.3px;" width="11.4" height="15" viewBox="0 0 11.4 15" preserveAspectRatio="none"><rect x="0" y="0" width="11.4" height="15" fill="#e6f4f4"/><rect x="0" y="0" width="11.4" height="3.3" fill="#0e4c63"/><path d="M0.4 3.3V14.6H11V3.3" stroke="#c9e2e2" stroke-width="0.8" fill="none"/><path d="M2 6.6H9.4" stroke="#7f9a9a" stroke-width="1.2"/><path d="M2 9.4H9.4" stroke="#2f6f7a" stroke-width="1.2"/><path d="M2 12.2H9.4" stroke="#234a55" stroke-width="1.2"/></svg>
<svg class="r" style="left:264.6px;top:815.3px;" width="11.4" height="15" viewBox="0 0 11.4 15" preserveAspectRatio="none"><rect x="0" y="0" width="11.4" height="15" fill="#e6f4f4"/><rect x="0" y="0" width="11.4" height="3.3" fill="#0e4c63"/><path d="M0.4 3.3V14.6H11V3.3" stroke="#c9e2e2" stroke-width="0.8" fill="none"/><path d="M2 6.6H9.4" stroke="#7f9a9a" stroke-width="1.2"/><path d="M2 9.4H9.4" stroke="#2f6f7a" stroke-width="1.2"/><path d="M2 12.2H9.4" stroke="#234a55" stroke-width="1.2"/></svg>
<svg class="r" style="left:395.6px;top:815.3px;" width="11.4" height="15" viewBox="0 0 11.4 15" preserveAspectRatio="none"><rect x="0" y="0" width="11.4" height="15" fill="#e6f4f4"/><rect x="0" y="0" width="11.4" height="3.3" fill="#0e4c63"/><path d="M0.4 3.3V14.6H11V3.3" stroke="#c9e2e2" stroke-width="0.8" fill="none"/><path d="M2 6.6H9.4" stroke="#7f9a9a" stroke-width="1.2"/><path d="M2 9.4H9.4" stroke="#2f6f7a" stroke-width="1.2"/><path d="M2 12.2H9.4" stroke="#234a55" stroke-width="1.2"/></svg>
<svg class="r" style="left:508.6px;top:815.3px;" width="11.4" height="15" viewBox="0 0 11.4 15" preserveAspectRatio="none"><rect x="0" y="0" width="11.4" height="15" fill="#e6f4f4"/><rect x="0" y="0" width="11.4" height="3.3" fill="#0e4c63"/><path d="M0.4 3.3V14.6H11V3.3" stroke="#c9e2e2" stroke-width="0.8" fill="none"/><path d="M2 6.6H9.4" stroke="#7f9a9a" stroke-width="1.2"/><path d="M2 9.4H9.4" stroke="#2f6f7a" stroke-width="1.2"/><path d="M2 12.2H9.4" stroke="#234a55" stroke-width="1.2"/></svg>
<svg class="r" style="left:619.6px;top:815.3px;" width="11.4" height="15" viewBox="0 0 11.4 15" preserveAspectRatio="none"><rect x="0" y="0" width="11.4" height="15" fill="#e6f4f4"/><rect x="0" y="0" width="11.4" height="3.3" fill="#0e4c63"/><path d="M0.4 3.3V14.6H11V3.3" stroke="#c9e2e2" stroke-width="0.8" fill="none"/><path d="M2 6.6H9.4" stroke="#7f9a9a" stroke-width="1.2"/><path d="M2 9.4H9.4" stroke="#2f6f7a" stroke-width="1.2"/><path d="M2 12.2H9.4" stroke="#234a55" stroke-width="1.2"/></svg>
<svg class="r" style="left:733.6px;top:815.3px;" width="11.4" height="15" viewBox="0 0 11.4 15" preserveAspectRatio="none"><rect x="0" y="0" width="11.4" height="15" fill="#e6f4f4"/><rect x="0" y="0" width="11.4" height="3.3" fill="#0e4c63"/><path d="M0.4 3.3V14.6H11V3.3" stroke="#c9e2e2" stroke-width="0.8" fill="none"/><path d="M2 6.6H9.4" stroke="#7f9a9a" stroke-width="1.2"/><path d="M2 9.4H9.4" stroke="#2f6f7a" stroke-width="1.2"/><path d="M2 12.2H9.4" stroke="#234a55" stroke-width="1.2"/></svg>
<svg class="r" style="left:1417px;top:849px;" width="11" height="11" viewBox="0 0 11 11" preserveAspectRatio="none"><g fill="#bfe0f7"><rect x="8" y="0" width="2" height="2"/><rect x="4" y="4" width="2" height="2"/><rect x="8" y="4" width="2" height="2"/><rect x="0" y="8" width="2" height="2"/><rect x="4" y="8" width="2" height="2"/><rect x="8" y="8" width="2" height="2"/></g></svg>
<div class="r" style="left:259px;top:806px;width:1150px;height:7px;overflow:hidden;">
<div class="t" style="left:3.00px;top:1.00px;font-size:10px;line-height:16px;color:#333;transform:scale(1.2141,1.200);transform-origin:0 50%;font-family:'Liberation Mono', monospace;">2&gt;---Compile check completed (error:0, Warning:0)</div>
</div>
<div class="r" style="left:217px;top:860px;width:48px;height:40px;background:#8a4a1c;"></div>
<div class="r" style="left:217px;top:898px;width:48px;height:2px;background:#f0761a;"></div>
<div class="r" style="left:123px;top:898px;width:40px;height:2px;background:#7fd3da;"></div>
<div class="r" style="left:270px;top:898px;width:40px;height:2px;background:#7fd3da;"></div>
<div class="r" style="left:564px;top:898px;width:40px;height:2px;background:#7fd3da;"></div>
<div class="r" style="left:613px;top:898px;width:40px;height:2px;background:#7fd3da;"></div>
<div class="r" style="left:662px;top:898px;width:40px;height:2px;background:#7fd3da;"></div>
<div class="r" style="left:711px;top:898px;width:39px;height:2px;background:#7fd3da;"></div>
<svg class="r" style="left:16px;top:873px;" width="16" height="16" viewBox="0 0 16 16" preserveAspectRatio="none"><path d="M0 2.3L6.6 1.4V7.6H0ZM7.6 1.25L16 0V7.6H7.6ZM0 8.5H6.6V14.7L0 13.8ZM7.6 8.5H16V16L7.6 14.8Z" fill="#fff"/></svg>
<svg class="r" style="left:64px;top:872px;" width="17" height="18" viewBox="0 0 17 18" preserveAspectRatio="none"><circle cx="10.5" cy="6.5" r="5.2" fill="none" stroke="#fff" stroke-width="1.5"/><path d="M6.8 10.4L0.8 17" stroke="#fff" stroke-width="1.6"/></svg>
<div class="r" style="left:102px;top:872px;width:1px;height:16px;background:#5a5a5a;"></div>
<div class="r" style="left:105px;top:872px;width:1px;height:16px;background:#5a5a5a;"></div>
<svg class="r" style="left:131px;top:869px;" width="24" height="24" viewBox="0 0 24 24" preserveAspectRatio="none"><circle cx="12" cy="12" r="11.5" fill="#2a6df4"/><path d="M12 0.5A11.5 11.5 0 0 1 23 8.5L14 10Z" fill="#38c34a"/><path d="M23 9A11.5 11.5 0 0 1 14 23.3L13.5 14Z" fill="#38c34a"/><path d="M15 23.2A11.5 11.5 0 0 1 1.5 16L10 13.5Z" fill="#f6c21a"/><path d="M1.3 16A11.5 11.5 0 0 1 3 4.5L10.5 10.5Z" fill="#ea3a2c"/><path d="M2.6 5A11.5 11.5 0 0 1 12 0.5L12 8Z" fill="#2a6df4"/><circle cx="12" cy="12" r="5.4" fill="#101010"/></svg>
<svg class="r" style="left:180px;top:869px;" width="24" height="24" viewBox="0 0 24 24" preserveAspectRatio="none"><rect x="0.5" y="0.5" width="23" height="23" fill="#1f8b50" stroke="#4bb07a" stroke-width="0.8"/><path d="M2 23L5 18H19L22 23Z" fill="#e9f4ee"/><text x="12" y="22.6" font-size="5" font-weight="bold" text-anchor="middle" fill="#1f8b50" font-family="Liberation Sans">PI</text><circle cx="11" cy="8" r="4.2" fill="none" stroke="#fff" stroke-width="1.1"/><path d="M11 7L16.5 11.5L13.8 11.8L15 15L13.6 15.6L12.4 12.6L10.6 14.4Z" fill="#1f8b50" stroke="#fff" stroke-width="0.9"/></svg>
<svg class="r" style="left:230px;top:869px;" width="22" height="23" viewBox="0 0 22 23" preserveAspectRatio="none"><rect x="0" y="0" width="22" height="23" rx="1.5" fill="#fcd116"/><rect x="0" y="0" width="22" height="4" rx="1.5" fill="#f3c20c"/><path d="M11 23L22 12V21.5A1.5 1.5 0 0 1 20.5 23Z" fill="#3a3a3a"/></svg>
<svg class="r" style="left:278px;top:869px;" width="24" height="24" viewBox="0 0 24 24" preserveAspectRatio="none"><defs><linearGradient id="ed" x1="0" y1="0" x2="1" y2="1"><stop offset="0" stop-color="#35c1f1"/><stop offset="0.5" stop-color="#1b8fd8"/><stop offset="1" stop-color="#0c59a4"/></linearGradient><linearGradient id="ed2" x1="0" y1="0" x2="1" y2="0"><stop offset="0" stop-color="#2fc2df"/><stop offset="1" stop-color="#55d66a"/></linearGradient></defs><path d="M12 0.5C19 0.5 24 5.5 24 11.5C24 15 21.5 17 18.5 17C15.5 17 14 15.5 14.5 14C11 14 9 12 9.5 9C5 10 3 15 6 19.5C8 22.5 12 23.8 16 23C9 25.5 0.5 20.5 0.5 12C0.5 5.5 5.5 0.5 12 0.5Z" fill="url(#ed)"/><path d="M1.5 9C3 3.5 8 0.5 12.5 0.5C19 0.5 24 5.5 24 11.5C24 13 23.5 14.3 22.6 15.2C23 9 18 5.5 12.5 5.5C7 5.5 3 7 1.5 9Z" fill="url(#ed2)"/><circle cx="6" cy="18" r="5.2" fill="#c9c9c9"/><circle cx="6" cy="16.3" r="1.9" fill="#fff"/><path d="M2.4 21C3 18.6 9 18.6 9.6 21C8 23.6 4 23.6 2.4 21Z" fill="#fff"/></svg>
<svg class="r" style="left:327px;top:869px;" width="24" height="24" viewBox="0 0 24 24" preserveAspectRatio="none"><defs><linearGradient id="oq" x1="0" y1="0" x2="0" y2="1"><stop offset="0" stop-color="#ff7a3c"/><stop offset="1" stop-color="#e9401e"/></linearGradient></defs><path d="M12 0.5A11.5 11.5 0 1 0 12 23.5H23.5V19.5H20A11.5 11.5 0 0 0 12 0.5Z" fill="url(#oq)"/><circle cx="12" cy="12" r="4.6" fill="#101010"/></svg>
<svg class="r" style="left:375px;top:870px;" width="24" height="22" viewBox="0 0 24 22" preserveAspectRatio="none"><path d="M10 1.5C4.5 1.5 1.2 5 1.2 8.8C1.2 11.2 2.4 13.2 4.4 14.6L3.8 17.6L7 16C8 16.3 9 16.4 10 16.4" stroke="#2b8df0" stroke-width="2" fill="none"/><path d="M10 1.5C15 1.5 18.6 4.8 18.8 8.4" stroke="#2b8df0" stroke-width="2" fill="none"/><path d="M17.5 9.5L19.2 13L17.5 16.5L15.8 13Z" fill="#f6b720"/><path d="M13 14.6L16.5 12.9L20 14.6L16.5 16.3Z" fill="none"/><circle cx="14" cy="14.8" r="1.7" fill="#2fc75a"/><circle cx="21" cy="14.8" r="1.7" fill="#f6b720"/><circle cx="17.5" cy="11.3" r="1.7" fill="#2b8df0"/><circle cx="17.5" cy="18.3" r="1.7" fill="#ef4a3c"/></svg>
<svg class="r" style="left:428px;top:869px;" width="18" height="24" viewBox="0 0 18 24" preserveAspectRatio="none"><rect x="0" y="0" width="8.5" height="10" fill="#3a7bf0"/><rect x="9.5" y="0" width="8.5" height="10" fill="#f7c51c"/><path d="M0 11H8.5V24L0 18Z" fill="#ea4035"/><path d="M9.5 11H18V24L13.75 19L9.5 24Z" fill="#34b556"/></svg>
<svg class="r" style="left:473px;top:872.5px;" width="24" height="16" viewBox="0 0 24 19" preserveAspectRatio="none"><defs><linearGradient id="wp473" x1="0" y1="0" x2="0" y2="1"><stop offset="0" stop-color="#ff3a24"/><stop offset="1" stop-color="#e8261a"/></linearGradient></defs><path d="M0 0.5H5.2L8.2 12L10.6 3.5H13.4L15.8 12L18.8 0.5H24L19 18.5H13.4L12 13L10.6 18.5H5Z" fill="url(#wp473)"/><path d="M8.2 12L10.6 3.5L12 8.5L9.6 17Z" fill="#ff7a4a" opacity="0.7"/></svg>
<svg class="r" style="left:571px;top:872.5px;" width="24" height="16" viewBox="0 0 24 19" preserveAspectRatio="none"><defs><linearGradient id="wp571" x1="0" y1="0" x2="0" y2="1"><stop offset="0" stop-color="#ff3a24"/><stop offset="1" stop-color="#e8261a"/></linearGradient></defs><path d="M0 0.5H5.2L8.2 12L10.6 3.5H13.4L15.8 12L18.8 0.5H24L19 18.5H13.4L12 13L10.6 18.5H5Z" fill="url(#wp571)"/><path d="M8.2 12L10.6 3.5L12 8.5L9.6 17Z" fill="#ff7a4a" opacity="0.7"/></svg>
<svg class="r" style="left:620px;top:872.5px;" width="24" height="16" viewBox="0 0 24 19" preserveAspectRatio="none"><defs><linearGradient id="wp620" x1="0" y1="0" x2="0" y2="1"><stop offset="0" stop-color="#ff3a24"/><stop offset="1" stop-color="#e8261a"/></linearGradient></defs><path d="M0 0.5H5.2L8.2 12L10.6 3.5H13.4L15.8 12L18.8 0.5H24L19 18.5H13.4L12 13L10.6 18.5H5Z" fill="url(#wp620)"/><path d="M8.2 12L10.6 3.5L12 8.5L9.6 17Z" fill="#ff7a4a" opacity="0.7"/></svg>
<svg class="r" style="left:669px;top:872.5px;" width="24" height="16" viewBox="0 0 24 19" preserveAspectRatio="none"><defs><linearGradient id="wp669" x1="0" y1="0" x2="0" y2="1"><stop offset="0" stop-color="#ff3a24"/><stop offset="1" stop-color="#e8261a"/></linearGradient></defs><path d="M0 0.5H5.2L8.2 12L10.6 3.5H13.4L15.8 12L18.8 0.5H24L19 18.5H13.4L12 13L10.6 18.5H5Z" fill="url(#wp669)"/><path d="M8.2 12L10.6 3.5L12 8.5L9.6 17Z" fill="#ff7a4a" opacity="0.7"/></svg>
<svg class="r" style="left:523px;top:869px;" width="22" height="22" viewBox="0 0 22 22" preserveAspectRatio="none"><circle cx="11" cy="11" r="11" fill="#1d7fe6"/><path d="M8 4.5H14L11.5 9.5H15.5L8.5 18L10.2 12H6.5Z" fill="#fff"/></svg>
<svg class="r" style="left:719px;top:869px;" width="22" height="23" viewBox="0 0 22 23" preserveAspectRatio="none"><rect x="0" y="0" width="22" height="23" fill="#2a5ca6"/><path d="M0 23V19L3 16H19L22 19V23Z" fill="#e4e9f2"/><text x="11" y="22.4" font-size="5.2" font-weight="bold" text-anchor="middle" fill="#1c3f73" font-family="Liberation Sans">PLC</text><path d="M3 7H7M7 4.5V9.5M9.5 4.5V9.5M9.5 7H14M14 4.5V12M11 12H17M15 4.5H18" stroke="#fff" stroke-width="1" fill="none"/><rect x="17" y="0.5" width="4.5" height="5" fill="#dfe6f2"/><text x="19.2" y="4.8" font-size="5" text-anchor="middle" fill="#1c3f73" font-family="Liberation Sans">2</text></svg>
<div class="r" style="left:871px;top:872px;width:1px;height:16px;background:#5a5a5a;"></div>
<div class="r" style="left:874px;top:872px;width:1px;height:16px;background:#5a5a5a;"></div>
<div class="t" style="left:889.00px;top:869.80px;font-size:11px;line-height:17px;color:#fff;transform:scale(1.0604,1.150);transform-origin:0 50%;font-family:'Liberation Mono', monospace;">CH</div>
<svg class="r" style="left:909px;top:870px;" width="18" height="17" viewBox="0 0 18 17" preserveAspectRatio="none"><path d="M2 1.2L16.5 0L18 13.5L3 16.5Z" fill="#f0531c"/><text x="9.8" y="13.6" font-size="15" font-weight="bold" font-style="italic" text-anchor="middle" fill="#fff" font-family="Liberation Sans">S</text></svg>
<svg class="r" style="left:934px;top:870px;" width="14" height="16" viewBox="0 0 14 16" preserveAspectRatio="none"><path d="M1.5 4H12.5V10.5H1.5Z" stroke="#fff" stroke-width="1.5" fill="none"/><path d="M7 0.5V15.5" stroke="#fff" stroke-width="1.6"/></svg>
<svg class="r" style="left:953px;top:871px;" width="15" height="15" viewBox="0 0 15 15" preserveAspectRatio="none"><path d="M9.5 0.5C12 4 11.5 10 3 12.8C8 15.8 14.6 12 14.6 6.8C14.6 3.6 12.4 1.2 9.5 0.5Z" fill="#fff"/></svg>
<svg class="r" style="left:975px;top:872px;" width="12" height="14" viewBox="0 0 12 14" preserveAspectRatio="none"><circle cx="1.8" cy="2" r="1.2" fill="none" stroke="#fff" stroke-width="0.9"/><path d="M8.5 6.5C9.8 7.6 9.2 9.6 7.6 10.6" stroke="#fff" stroke-width="1.5" fill="none"/></svg>
<svg class="r" style="left:993px;top:872px;" width="16" height="12" viewBox="0 0 16 12" preserveAspectRatio="none"><rect x="0.7" y="0.7" width="14.6" height="10.6" fill="none" stroke="#fff" stroke-width="1.4"/><path d="M0.7 4.2H15.3M0.7 7.6H15.3M4.4 0.7V7.6M8 0.7V7.6M11.6 0.7V7.6" stroke="#fff" stroke-width="1.1"/></svg>
<svg class="r" style="left:1014px;top:871px;" width="12" height="13" viewBox="0 0 12 13" preserveAspectRatio="none"><circle cx="6" cy="3.2" r="2.9" fill="#fff"/><path d="M0.5 12.5V10.5C0.5 7.5 11.5 7.5 11.5 10.5V12.5Z" fill="#fff"/></svg>
<svg class="r" style="left:1033px;top:872px;" width="14" height="12" viewBox="0 0 14 12" preserveAspectRatio="none"><path d="M0 1H14M0 6H14M0 11H14" stroke="#fff" stroke-width="1.5"/></svg>
<svg class="r" style="left:1053px;top:871px;" width="15" height="14" viewBox="0 0 15 14" preserveAspectRatio="none"><path d="M6 1.5H1V13H12.5V8" stroke="#fff" stroke-width="1.5" fill="none"/><path d="M6 8L13.5 0.8M8.5 0.8H13.8V6" stroke="#fff" stroke-width="1.5" fill="none"/></svg>
<svg class="r" style="left:1192px;top:872px;" width="26" height="16" viewBox="0 0 26 16" preserveAspectRatio="none"><defs><linearGradient id="cl" x1="0" y1="0" x2="0" y2="1"><stop offset="0" stop-color="#f4f8ff"/><stop offset="1" stop-color="#8fb0e6"/></linearGradient></defs><path d="M5.5 15.5C1.5 15.5 0.2 12.5 0.6 10.5C1 8.5 3 7.2 5 7.6C5.5 3.5 9 0.5 12.5 0.5C16 0.5 18.5 2.5 19.4 5.6C23 5.2 25.6 7.6 25.6 10.8C25.6 13.6 23.5 15.5 21 15.5Z" fill="url(#cl)"/></svg>
<svg class="r" style="left:1266px;top:873px;" width="13" height="15" viewBox="0 0 13 15" preserveAspectRatio="none"><path d="M1 0.8V14.5M1 1H5L3 5.2C5.6 7.4 5 10 2.6 10.4" stroke="#fff" stroke-width="1.3" fill="none"/><path d="M7 14C7.6 12 7.4 8 7.4 1H12V13.5L10.4 13.6M7.4 5H12M7.4 9H12" stroke="#fff" stroke-width="1.3" fill="none"/></svg>
<svg class="r" style="left:1296px;top:875px;" width="13" height="8" viewBox="0 0 13 8" preserveAspectRatio="none"><path d="M0.8 7.2L6.5 1.2L12.2 7.2" stroke="#fff" stroke-width="1.5" fill="none"/></svg>
<svg class="r" style="left:1317px;top:871px;" width="18" height="18" viewBox="0 0 18 18" preserveAspectRatio="none"><path d="M8 13.6C3.5 13.6 1 10.6 1 7.4C1 4 4 1.2 8 1.2C12 1.2 14.6 3.8 14.8 6.6" stroke="#2b8df0" stroke-width="2" fill="none"/><path d="M4.4 12.5L3.6 15.4L6.6 13.8" fill="#2b8df0"/><circle cx="9.6" cy="12" r="1.6" fill="#2fc75a"/><circle cx="15.6" cy="12" r="1.6" fill="#f6b720"/><circle cx="12.6" cy="9" r="1.6" fill="#2b8df0"/><circle cx="12.6" cy="15" r="1.6" fill="#ef4a3c"/></svg>
<svg class="r" style="left:1342px;top:872px;" width="18" height="18" viewBox="0 0 18 18" preserveAspectRatio="none"><path d="M0 0.5H4.2L7.4 9.5L10.6 0.5H16.4L15 3.6H12.6L8.6 14H6Z" fill="#e82a1e"/><circle cx="12.4" cy="11.6" r="4.2" fill="#e8493c"/><path d="M12.4 8.8V12" stroke="#fff" stroke-width="1.4"/><circle cx="12.4" cy="14" r="0.8" fill="#fff"/></svg>
<div class="r" style="left:1436px;top:862px;width:1px;height:38px;background:#7a7a7a;"></div>
</body></html>
